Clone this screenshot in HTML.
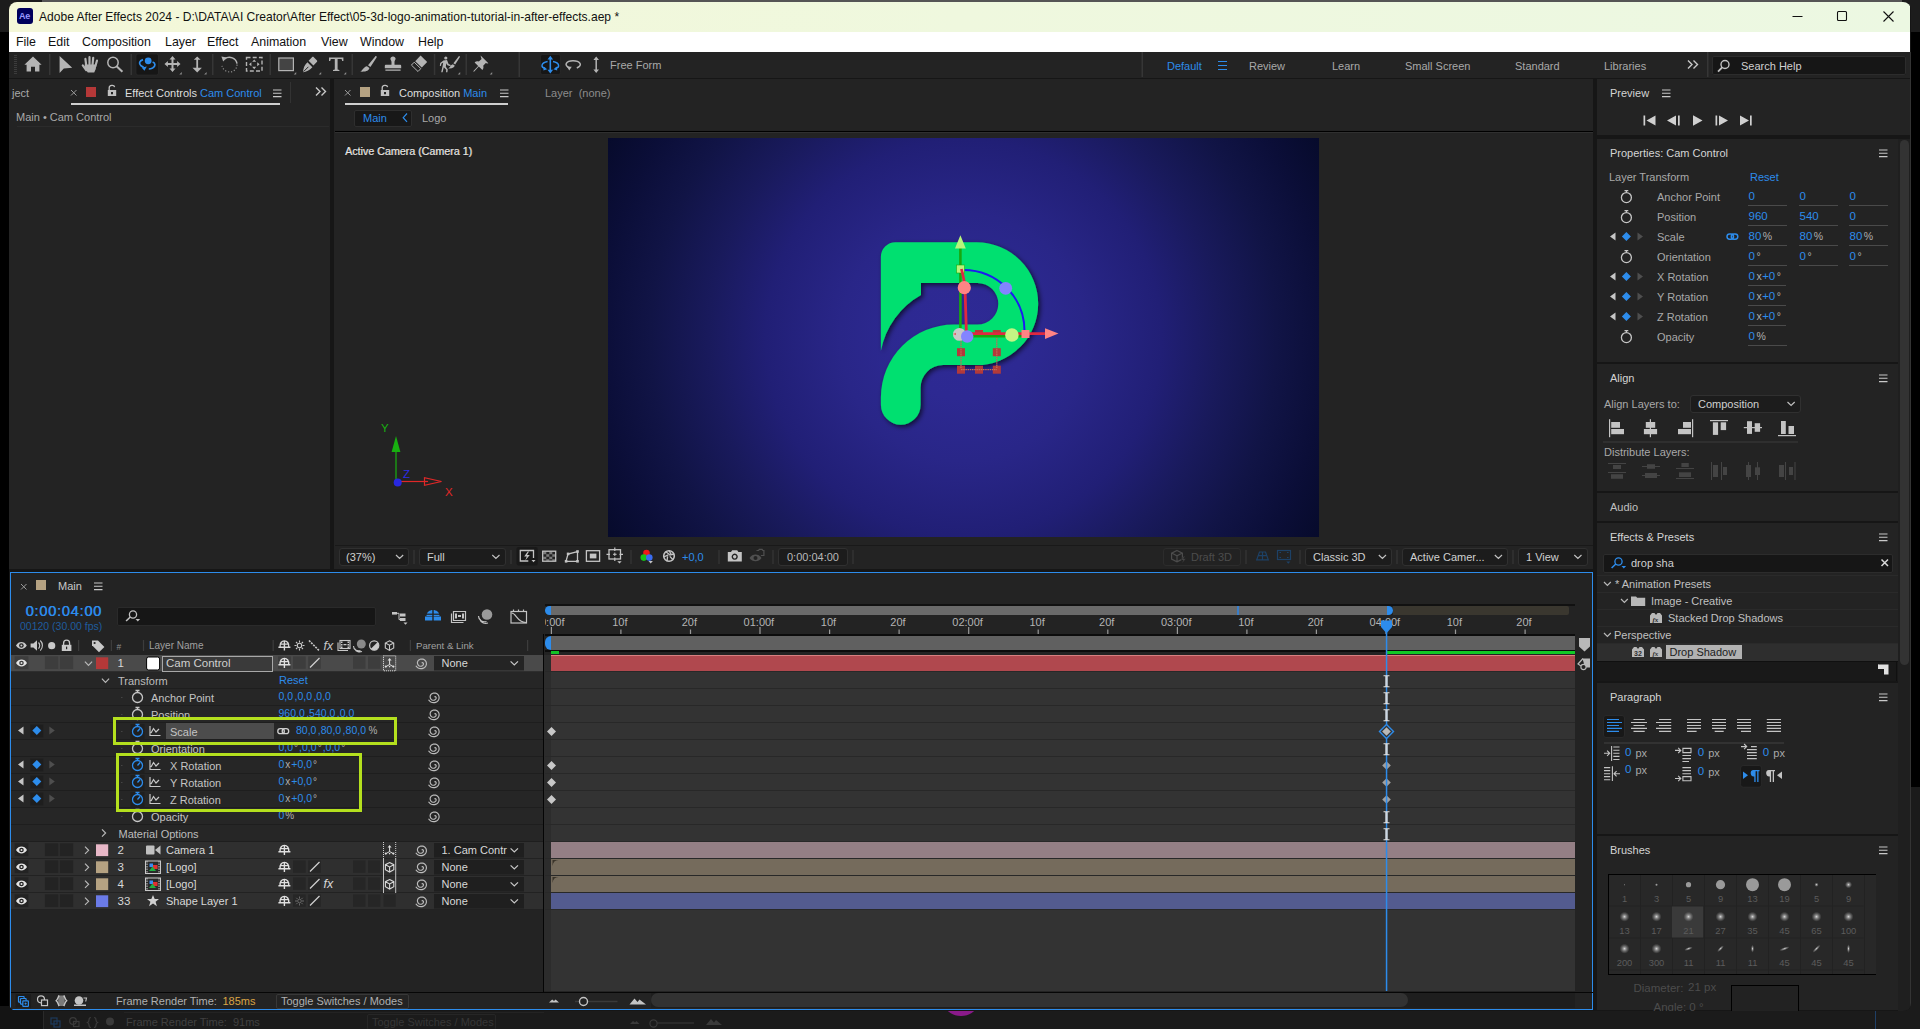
<!DOCTYPE html>
<html><head><meta charset="utf-8"><title>Adobe After Effects 2024</title>
<style>
*{box-sizing:border-box;margin:0;padding:0}
html,body{width:1920px;height:1029px;overflow:hidden;background:#1b1b1b}
body{position:relative;font-family:"Liberation Sans",sans-serif;font-size:11px;color:#a9a9a9;line-height:1}
.a{position:absolute}
.t{position:absolute;white-space:nowrap;line-height:14px;height:14px}
.w{color:#dedede}
.b{color:#2d8ceb}
.g{color:#a9a9a9}
.d{color:#6a6a6a}
#win{position:absolute;left:9px;top:2px;width:1902px;height:1009px;border-radius:8px;overflow:hidden;background:#161616}
/* inside #win coordinates are page coords shifted by (-9,-2): use .pg wrapper */
#pg{position:absolute;left:-9px;top:-2px;width:1920px;height:1029px}
.panel{position:absolute;background:#232323}
svg{position:absolute;overflow:visible}
.sep{position:absolute;width:1px;background:#3a3a3a}
.hl{position:absolute;height:1px;background:#161616}
</style></head><body>
<!-- desktop behind -->
<div class="a" style="left:0;top:0;width:1920px;height:32px;background:#1c1c1c"></div>
<div class="a" style="left:0;top:32px;width:9px;height:974px;background:#000"></div>
<div class="a" style="left:42px;top:0;width:1860px;height:3px;background:#555"></div>
<div class="a" style="left:1910px;top:32px;width:10px;height:755px;background:#000"></div>
<div class="a" style="left:1910px;top:787px;width:10px;height:242px;background:#1b1b1b"></div>
<!-- ghost window below -->
<div class="a" style="left:0;top:1010px;width:1920px;height:19px;background:#1b1b1b"></div>
<div class="a" style="left:0;top:1006px;width:43px;height:23px;background:#141414"></div><div class="a" style="left:43px;top:1010px;width:1px;height:19px;background:#2a2a2a"></div>
<div class="a" style="left:124px;top:1012px;width:420px;height:1px;background:#232323"></div>
<div class="t" style="left:126px;top:1015px;color:#404040">Frame Render Time:&nbsp; 91ms</div>
<div class="a" style="left:367px;top:1014px;width:129px;height:16px;border:1px solid #262626;border-radius:2px"></div>
<div class="t" style="left:372px;top:1015px;color:#363636">Toggle Switches / Modes</div>
<svg style="left:40px;top:1012px" width="700" height="17" viewBox="40 1012 700 17"><g fill="none" stroke="#1d3a5c" stroke-width="1.200"><rect x="51" y="1018" width="6" height="6"/><rect x="54" y="1021" width="6" height="6"/></g><g fill="none" stroke="#3a3a3a" stroke-width="1.200"><circle cx="73" cy="1021" r="3.300"/><rect x="73.500" y="1021.500" width="5.500" height="5"/><path d="M91 1017.500c-2 0-2 1-2 2.500s-.5 2-1.500 2.500c1 .5 1.500 1 1.500 2.500s0 2.500 2 2.500M94 1017.500c2 0 2 1 2 2.500s.5 2 1.500 2.500c-1 .5-1.500 1-1.500 2.500s0 2.500-2 2.500"/><path d="M654 1023h40"/><circle cx="653.500" cy="1023.500" r="3.600" fill="#1b1b1b"/></g><circle cx="110" cy="1021.500" r="4" fill="#3a3a3a"/><path d="M630 1024l3-3 2 1.500 1.500-1.500 3 3zM706 1025l5-6 3 3.500 2-2.500 6 5z" fill="#3a3a3a"/></svg>
<div class="a" style="left:946px;top:996px;width:30px;height:20px;border-radius:50%;background:#8a1a8a"></div>
<div class="a" style="left:1875px;top:1010px;width:1px;height:19px;background:#1f3f66"></div>
<div id="win"><div id="pg">
<!-- title bar -->
<div class="a" style="left:9px;top:2px;width:1901px;height:30px;background:linear-gradient(90deg,#f4f7d8 0%,#eff8de 50%,#ecf8e2 100%)"></div>
<div class="a" style="left:17px;top:8px;width:16px;height:16px;border-radius:3px;background:#00005b"></div>
<div class="t" style="left:19px;top:9px;font-size:9px;font-weight:bold;color:#9999ff;letter-spacing:-0.3px">Ae</div>
<div class="t" style="left:39px;top:10px;font-size:12.050px;color:#111">Adobe After Effects 2024 - D:\DATA\AI Creator\After Effect\05-3d-logo-animation-tutorial-in-after-effects.aep *</div>
<svg style="left:1790px;top:8px" width="110" height="18" viewBox="0 0 110 18"><g stroke="#111" stroke-width="1.1" fill="none"><path d="M2.5 8.5h10"/><rect x="47.5" y="3.5" width="9" height="9" rx="1"/><path d="M93.5 3.5l10 10M103.5 3.5l-10 10"/></g></svg>
<!-- menu bar -->
<div class="a" style="left:9px;top:32px;width:1901px;height:20px;background:#fff"></div>
<div class="t" style="left:16px;top:35px;font-size:12.4px;color:#111">File</div>
<div class="t" style="left:48px;top:35px;font-size:12.4px;color:#111">Edit</div>
<div class="t" style="left:82px;top:35px;font-size:12.4px;color:#111">Composition</div>
<div class="t" style="left:165px;top:35px;font-size:12.4px;color:#111">Layer</div>
<div class="t" style="left:207px;top:35px;font-size:12.4px;color:#111">Effect</div>
<div class="t" style="left:251px;top:35px;font-size:12.4px;color:#111">Animation</div>
<div class="t" style="left:321px;top:35px;font-size:12.4px;color:#111">View</div>
<div class="t" style="left:360px;top:35px;font-size:12.4px;color:#111">Window</div>
<div class="t" style="left:418px;top:35px;font-size:12.4px;color:#111">Help</div>
<!-- toolbar -->
<div class="a" style="left:9px;top:52px;width:1901px;height:26px;background:#232323"></div>
<svg style="left:9px;top:52px" width="1901" height="26" viewBox="9 52 1901 26">
<g fill="#b4b4b4" stroke="none">
<!-- grip -->
<path d="M14 55h3v1h-3zM14 57h3v1h-3zM14 59h3v1h-3zM14 61h3v1h-3zM14 63h3v1h-3zM14 65h3v1h-3zM14 67h3v1h-3zM14 69h3v1h-3zM14 71h3v1h-3zM14 73h3v1h-3z" fill="#3c3c3c"/>
<!-- home -->
<path d="M33 56.6l8.6 8.2h-2.2v6.6h-4.4v-4.6h-4v4.6h-4.4v-6.6h-2.2z"/>
<!-- selection arrow -->
<path d="M59.6 56v17l4.2-4.6 8.4-0.6z"/>
<!-- hand -->
<path d="M84.600 64.500h11.600l-.4 4.500-1.600 3.600h-6.400l-2.600-3.600z"/>
<path d="M86.300 66l-.9-7.200M89.500 65v-7.800M92.500 65l.7-7.200M95.300 66.500l1.700-6M86.200 70l-3.400-4.600" stroke="#b4b4b4" stroke-width="2.200" stroke-linecap="round" fill="none"/>
<!-- zoom -->
<circle cx="113" cy="62.500" r="5.200" fill="none" stroke="#b4b4b4" stroke-width="1.500"/>
<path d="M116.600 66.200l5.800 5.600" stroke="#b4b4b4" stroke-width="2" fill="none"/>
<!-- move -->
<path d="M172.500 56l3 3.400h-2v3.600h3.600v-2l3.400 3-3.400 3v-2h-3.600v3.600h2l-3 3.400-3-3.400h2v-3.600h-3.600v2l-3.400-3 3.400-3v2h3.600v-3.600h-2z"/>
<path d="M181.800 74.500v-2.500l-2.500 2.500zM206.600 74.500v-2.500l-2.500 2.500zM157 74.500v-2.500l-2.500 2.500z" fill="#8a8a8a"/>
<!-- dolly -->
<path d="M197.200 56.500l3.400 3.300h-2.500v8h3.800l-4.700 4.700-4.700-4.700h3.800v-8h-2.500z"/>
<!-- rect -->
<rect x="278.800" y="58" width="14.600" height="12.600" fill="#444" stroke="#b4b4b4" stroke-width="1.200"/>
<path d="M296.200 74.500v-2.500l-2.500 2.500zM321.200 74.500v-2.500l-2.500 2.500zM346.200 74.500v-2.500l-2.500 2.500zM460.200 74.500v-2.500l-2.500 2.500zM492.200 74.500v-2.500l-2.500 2.500z" fill="#8a8a8a"/>
<!-- pen -->
<path d="M303 72.200c.3-3.600 1.400-7.400 4.400-10l5 5c-2.600 3-6.400 4.400-9.400 5zM308.600 60.800l3.400-3.600c.6-.6 1.200-.6 1.800 0l3 3c.6.600.6 1.200 0 1.800l-3.400 3.600z"/>
<path d="M303.600 71.600l4.800-4.800" stroke="#232323" stroke-width="1" fill="none"/>
<!-- T -->
<path d="M329 57.500h14.400v3.600h-1.200l-.6-2h-4v10.400l1.800.4v1.100h-6.400v-1.100l1.800-.4v-10.400h-4l-.6 2h-1.200z"/>
<!-- brush -->
<path d="M376.400 56.200c.4.200.4.800.2 1.200l-6.200 9.600-2.400-1.800 7.200-8.800c.4-.4.800-.4 1.200-.2zM367 66.200l2.400 1.800c-.4 2.400-3 4-9.200 3.600 2.600-1.200 3.200-4.800 6.800-5.400z"/>
<!-- stamp -->
<path d="M393 56.400c1.500 0 2.600 1.100 2.600 2.400 0 1.200-1.100 1.900-1.100 3.200v2.800h5.300c.9 0 1.400.5 1.400 1.400v2h-16.400v-2c0-.9.500-1.400 1.400-1.400h5.300v-2.800c0-1.300-1.100-2-1.100-3.200 0-1.300 1.100-2.400 2.600-2.400zM385.400 69.600h15.200v1.200h-15.200z"/>
<!-- eraser -->
<path d="M420.600 55.600l6.600 6.400-5.400 5.600-6.600-6.400z"/>
<path d="M414.200 62.200l6.600 6.400-2.800 2.900-6.600-6.400z" fill="#232323" stroke="#b4b4b4" stroke-width="1"/>
<!-- roto -->
<circle cx="445.800" cy="58" r="1.600"/>
<path d="M443.400 60.400l3.600-.4 1.600 4 2.200 1-.4 1.200-3-1-1-2-.6 3.600 2 2.600-.4 2.800h-1.400l.2-2.400-2.400-2.600-1.200 5h-1.400l1.600-7.200.4-2.400-1.800 1.200-.4 2.200-1.200-.2.400-2.800z"/>
<path d="M459.600 56.200c.4.200.4.700.2 1l-4.600 7.400-1.800-1.300 5.200-6.900c.3-.4.700-.4 1-.2zM452.800 64.200l1.900 1.400c-.3 1.900-2.300 3.300-6.500 2.900 2-1 2.300-3.800 4.600-4.300z"/>
<!-- pin -->
<path d="M480.600 55.600l7.800 7.600-1.200.4-1.400-.6-2.600 2.800c.6 1.600.2 3-.8 4.200l-3.600-3.600-4.800 5.400-.8-.6 5-5.200-3.600-3.600c1.200-1 2.600-1.400 4.200-.8l2.800-2.600-.6-1.400z"/>
</g>
<!-- separators -->
<g fill="#363636"><rect x="49" y="54" width="1.500" height="21"/><rect x="130.500" y="54" width="1.500" height="21"/><rect x="212" y="54" width="1.500" height="21"/><rect x="269.500" y="54" width="1.500" height="21"/><rect x="351.500" y="54" width="1.500" height="21"/><rect x="433.800" y="54" width="1.500" height="21"/><rect x="465.500" y="54" width="1.500" height="21"/><rect x="518.500" y="52" width="1.500" height="25"/><rect x="1141.500" y="52" width="1.500" height="25"/><rect x="1707" y="52" width="1.500" height="25"/></g>
<!-- orbit selected -->
<rect x="136" y="54" width="22.500" height="21" rx="2" fill="#161616" stroke="#2e2e2e" stroke-width=".6"/>
<circle cx="148.200" cy="60.800" r="3.400" fill="#2d8ceb"/>
<path d="M143 59.600c-3.600 1.200-4.600 4-2 6.200l2.600 1.400M152.600 62c3 1 3.200 4.200 0 6-1.200.6-2.400 1-3.800 1" fill="none" stroke="#2d8ceb" stroke-width="1.700"/>
<path d="M141.600 67.400l5.200-.8-2.400 4.200z" fill="#2d8ceb"/>
<!-- rotate tool -->
<path d="M224.600 58.800c5-3.600 11.600-.6 12.400 4.800" fill="none" stroke="#b4b4b4" stroke-width="1.500"/>
<path d="M237 64.600c.2 5.600-6 9.400-11.400 6.200-2-1.200-3.200-3-3.600-5" fill="none" stroke="#8a8a8a" stroke-width="1.200" stroke-dasharray="1.200 1.800"/>
<path d="M221.400 56.400l5.600 1-3.800 4.200z" fill="#b4b4b4"/>
<!-- pan behind -->
<rect x="246.500" y="57.500" width="15.500" height="13.500" fill="none" stroke="#b4b4b4" stroke-width="1.400" stroke-dasharray="4 2.200"/>
<path d="M254.200 59.400l2 2.400h-4zM254.200 69.200l2-2.400h-4zM249 64.200l2.400-2v4zM259.600 64.200l-2.400-2v4z" fill="#b4b4b4"/>
<!-- axis mode -->
<rect x="540.500" y="54.500" width="20" height="20" rx="2" fill="#161616" stroke="#2e2e2e" stroke-width=".6"/>
<path d="M550.300 58v13.500" stroke="#2d8ceb" stroke-width="1.600" fill="none"/>
<path d="M550.300 55.800l2.800 3.600h-5.600zM550.300 73.400l2.800-3.600h-5.600z" fill="#2d8ceb"/>
<path d="M547.600 61.400c-7 1.400-7 6 -2.400 7M553 61.400c7 1.400 7 6 2.400 7" fill="none" stroke="#2d8ceb" stroke-width="1.500"/>
<path d="M543.600 66.600l3.600 2.600-3.800 1.400zM557 66.600l-3.600 2.600 3.800 1.400z" fill="#2d8ceb"/>
<path d="M569.600 68c-6.400-2.800-3.400-7.200 3.400-7.200 7 0 10.400 4.400 3.800 7.200" fill="none" stroke="#b4b4b4" stroke-width="1.500"/>
<path d="M567 66.400l4.800.4-2.600 3.600z" fill="#b4b4b4"/>
<path d="M596.200 59v11.500" stroke="#b4b4b4" stroke-width="1.500" fill="none"/>
<path d="M596.200 56.600l2.800 3.400h-5.600zM596.200 73l2.800-3.400h-5.600z" fill="#b4b4b4"/>
</svg>
<div class="t" style="left:610px;top:58px">Free Form</div>
<!-- workspace bar -->
<div class="t b" style="left:1167px;top:59px">Default</div>
<svg style="left:1218px;top:61px" width="10" height="9"><path d="M0 .5h9M0 4.500h9M0 8.500h9" stroke="#2d8ceb" stroke-width="1.200"/></svg>
<div class="t" style="left:1249px;top:59px">Review</div>
<div class="t" style="left:1332px;top:59px">Learn</div>
<div class="t" style="left:1405px;top:59px">Small Screen</div>
<div class="t" style="left:1515px;top:59px">Standard</div>
<div class="t" style="left:1604px;top:59px">Libraries</div>
<svg style="left:1687px;top:60px" width="12" height="9"><path d="M1 .5l4 4-4 4M6.500 .5l4 4-4 4" stroke="#c8c8c8" stroke-width="1.400" fill="none"/></svg>
<div class="a" style="left:1712px;top:56px;width:194px;height:19px;background:#161616;border:1px solid #2c2c2c;border-radius:2px"></div>
<svg style="left:1716px;top:58px" width="16" height="16"><circle cx="9" cy="6.500" r="4" fill="none" stroke="#c0c0c0" stroke-width="1.400"/><path d="M6.200 9.400l-4.200 4.200" stroke="#c0c0c0" stroke-width="1.800"/></svg>
<div class="t" style="left:1741px;top:59px;color:#d0d0d0">Search Help</div>
<!-- ===== left panel: effect controls ===== -->
<div class="panel" style="left:9px;top:79px;width:321px;height:490px"></div>
<div class="t" style="left:12px;top:86px">ject</div>
<svg style="left:70px;top:89px" width="8" height="8"><path d="M1 1l5.500 5.500M6.500 1l-5.500 5.500" stroke="#9a9a9a" stroke-width="1"/></svg>
<div class="a" style="left:86px;top:87px;width:10px;height:10px;background:#b53838"></div>
<svg class="lock" style="left:107px;top:84px" width="10" height="13" viewBox="0 0 10 13"><path d="M2.200 6v-2.200c0-3 5-3.400 5.400-.6" fill="none" stroke="#c0c0c0" stroke-width="1.300"/><path d="M.8 6h8.400v6h-8.400z M4 8v2.200h2v-2.200z" fill="#c0c0c0" fill-rule="evenodd"/></svg>
<div class="t w" style="left:125px;top:86px">Effect Controls <span class="b">Cam Control</span></div>
<svg style="left:273px;top:89px" width="9" height="9"><path d="M0 1h8.500M0 4.300h8.500M0 7.600h8.500" stroke="#c8c8c8" stroke-width="1.100"/></svg>
<div class="a" style="left:290px;top:82px;width:1px;height:21px;background:#333"></div>
<svg style="left:315px;top:87px" width="12" height="9"><path d="M1 .5l4 4-4 4M6.500 .5l4 4-4 4" stroke="#c8c8c8" stroke-width="1.400" fill="none"/></svg>
<div class="a" style="left:71px;top:103px;width:209px;height:2px;background:#cfcfcf"></div>
<div class="t" style="left:16px;top:110px">Main &#8226; Cam Control</div>
<div class="a" style="left:17px;top:126px;width:312px;height:1px;background:#2b2b2b"></div>

<!-- ===== composition panel ===== -->
<div class="panel" style="left:334px;top:79px;width:1259px;height:490px"></div>
<svg style="left:344px;top:89px" width="8" height="8"><path d="M1 1l5.500 5.500M6.500 1l-5.500 5.500" stroke="#9a9a9a" stroke-width="1"/></svg>
<div class="a" style="left:360px;top:87px;width:10px;height:10px;background:#b5a282"></div>
<svg style="left:380px;top:84px" width="10" height="13" viewBox="0 0 10 13"><path d="M2.200 6v-2.200c0-3 5-3.400 5.400-.6" fill="none" stroke="#c0c0c0" stroke-width="1.300"/><path d="M.8 6h8.400v6h-8.400z M4 8v2.200h2v-2.200z" fill="#c0c0c0" fill-rule="evenodd"/></svg>
<div class="t w" style="left:399px;top:86px">Composition <span class="b">Main</span></div>
<svg style="left:500px;top:89px" width="9" height="9"><path d="M0 1h8.500M0 4.300h8.500M0 7.600h8.500" stroke="#c8c8c8" stroke-width="1.100"/></svg>
<div class="a" style="left:345px;top:103px;width:163px;height:2px;background:#cfcfcf"></div>
<div class="t" style="left:545px;top:86px;color:#8c8c8c">Layer &nbsp;(none)</div>
<div class="a" style="left:354px;top:110px;width:58px;height:17px;background:#181818;border:1px solid #2e2e2e;border-radius:2px"></div>
<div class="t b" style="left:363px;top:111px">Main</div>
<svg style="left:402px;top:113px" width="6" height="10"><path d="M5 .5l-3.800 4.200 3.800 4.200" stroke="#2d8ceb" stroke-width="1.200" fill="none"/></svg>
<div class="t" style="left:422px;top:111px">Logo</div>
<div class="a" style="left:335px;top:131px;width:1258px;height:1px;background:#000"></div>
<div class="a" style="left:335px;top:132px;width:1258px;height:1px;background:#303030"></div>
<div class="t" style="left:345px;top:144px;font-size:10.700px;color:#e6e6e6;text-shadow:0 0 1px #000,.4px 0 0 #e6e6e6">Active Camera (Camera 1)</div>
<!-- comp image -->
<div class="a" style="left:608px;top:138px;width:711px;height:399px;background:radial-gradient(circle 412px at 50% 50%,#2e2a95 0%,#2d2992 15%,#292688 30%,#211f76 48%,#191a5c 62%,#111446 76%,#0b0e38 88%,#060a2a 100%)"></div>
<svg style="left:608px;top:138px" width="711" height="399" viewBox="608 138 711 399">
<defs><filter id="ds" x="-20%" y="-20%" width="140%" height="140%"><feDropShadow dx="2" dy="2" stdDeviation="2.800" flood-color="#000" flood-opacity=".65"/></filter></defs>
<path filter="url(#ds)" fill="#00e070" d="M895.400 242.200H976.700A61.450 61.450 0 0 1 976.700 365.100H943A22.400 22.400 0 0 0 920.600 387.500V404.800A19.850 19.850 0 0 1 880.900 404.800V397.200A73 73 0 0 1 953.900 324.500H977.500A20.800 20.800 0 0 0 977.500 282.900H921V295A81.500 81.500 0 0 0 880.900 350.700V256.800A14.600 14.600 0 0 1 895.400 242.200Z"/>
<!-- gizmo -->
<g>
<path d="M960.400 331V247" stroke="#18a810" stroke-width="2.600"/>
<path d="M960.400 235.200l5.400 13.300h-10.800z" fill="#b8f57c"/>
<path d="M963.300 269.900A61 61 0 0 1 1024.500 331" fill="none" stroke="#1c1cf0" stroke-width="2"/>
<rect x="956.500" y="265" width="8" height="8" fill="#b8f57c" stroke="#18a810" stroke-width=".6"/>
<path d="M961.400 269c1.600 6 3 12 3.600 19l1.400 45" fill="none" stroke="#e02840" stroke-width="2.800"/>
<g fill="#b23a3a"><rect x="975" y="330" width="8" height="5"/><rect x="992.800" y="330" width="8" height="5"/><rect x="957" y="348.200" width="8" height="8"/><rect x="992.800" y="348.200" width="8" height="8"/><rect x="957" y="365.700" width="8" height="8"/><rect x="975" y="365.700" width="8" height="8"/><rect x="992.800" y="365.700" width="8" height="8"/></g>
<path d="M961 338v30M996.800 338v30M961 369.700h36" stroke="#c46a58" stroke-width="1.200" stroke-dasharray="1.500 .7" fill="none"/>
<circle cx="959.400" cy="334.400" r="6.400" fill="#c8c8c8"/>
<path d="M953 334l3-1.200v2.400z" fill="#e06060"/>
<path d="M970 336h56" stroke="#18a810" stroke-width="3"/>
<path d="M968 333.600h78" stroke="#e02840" stroke-width="2.800"/>
<path d="M1058.500 333.600l-13.500-5.400v10.800z" fill="#ff8484"/>
<rect x="1021.500" y="330" width="8" height="8" fill="#ff8484"/>
<circle cx="964.300" cy="287.700" r="6.600" fill="#ff8484"/>
<circle cx="1005.700" cy="288.300" r="6.400" fill="#8484ff"/>
<circle cx="967.200" cy="336.500" r="6.200" fill="#8484ff"/>
<circle cx="1011.900" cy="335" r="6.800" fill="#c4f584"/>
</g>
</svg>
<!-- axes indicator -->
<svg style="left:375px;top:418px" width="90" height="85" viewBox="375 418 90 85">
<path d="M396 482V448" stroke="#18b010" stroke-width="1.200"/><path d="M396 436l4.400 16h-8.800z" fill="#18b010"/>
<path d="M398 481.500h30" stroke="#e02828" stroke-width="1.200"/><path d="M441.500 481.500l-17-3.800v7.600z" fill="none" stroke="#e02828" stroke-width="1.200"/>
<circle cx="397.700" cy="482.500" r="4" fill="#2828e0"/>
<text x="381" y="432" font-size="11.500" fill="#18b010" font-family="Liberation Sans,sans-serif">Y</text>
<text x="403" y="478" font-size="11.500" fill="#2c2ce8" font-family="Liberation Sans,sans-serif">Z</text>
<text x="445" y="496" font-size="11.500" fill="#e02828" font-family="Liberation Sans,sans-serif">X</text>
</svg>
<!-- comp bottom bar -->
<style>
.dd{position:absolute;top:548px;height:18px;background:#1c1c1c;border:1px solid #303030;border-radius:3px}
.ddt{position:absolute;top:550px;line-height:14px;white-space:nowrap;color:#d0d0d0}
.vs{position:absolute;top:550px;width:2px;height:14px;background:#2e2e2e}
</style>
<div class="a" style="left:335px;top:545px;width:1258px;height:1px;background:#191919"></div>
<div class="dd" style="left:339px;width:70px"></div><div class="ddt" style="left:346px">(37%)</div>
<div class="vs" style="left:413px"></div>
<div class="dd" style="left:419px;width:87px"></div><div class="ddt" style="left:427px">Full</div>
<div class="vs" style="left:510px"></div>
<div class="vs" style="left:630px"></div>
<div class="vs" style="left:718px"></div>
<div class="vs" style="left:772px"></div>
<div class="dd" style="left:778px;width:70px"></div><div class="ddt" style="left:787px;color:#b8b8b8">0:00:04:00</div>
<div class="vs" style="left:852px"></div>
<div class="dd" style="left:1163px;width:78px;border-color:#2c2c2c;background:#222"></div><div class="ddt" style="left:1191px;color:#4c4c4c">Draft 3D</div>
<div class="vs" style="left:1245px"></div>
<div class="vs" style="left:1299px"></div>
<div class="dd" style="left:1305px;width:87px"></div><div class="ddt" style="left:1313px">Classic 3D</div>
<div class="vs" style="left:1396px"></div>
<div class="dd" style="left:1402px;width:106px"></div><div class="ddt" style="left:1410px">Active Camer...</div>
<div class="vs" style="left:1512px"></div>
<div class="dd" style="left:1518px;width:70px"></div><div class="ddt" style="left:1526px">1 View</div>
<svg style="left:334px;top:546px" width="1259" height="22" viewBox="334 546 1259 22">
<g fill="none" stroke="#c0c0c0" stroke-width="1.200">
<path d="M396 555l3.600 3.400 3.600-3.400M492.300 555l3.600 3.400 3.600-3.400M1378.800 555l3.600 3.400 3.600-3.400M1494.800 555l3.600 3.400 3.600-3.400M1574.300 555l3.600 3.400 3.600-3.400"/>
</g>
<rect x="516.500" y="547" width="21.200" height="18.500" rx="2" fill="#191919"/>
<g fill="none" stroke="#c4c4c4" stroke-width="1.300">
<path d="M533.500 558v-7.500h-13.200v10.500h8"/>
<rect x="542.700" y="551.200" width="13" height="10"/>
<path d="M566 561.300l2-7.300 9.500-2.500v9.800z"/>
<rect x="586.400" y="550.700" width="13.200" height="10.600"/>
<rect x="609" y="549.700" width="11.500" height="9.300"/>
</g>
<g fill="#c4c4c4">
<path d="M527.800 551.500l-3.600 5h2.600l-1.600 4 4.600-5.400h-2.800l2-3.600z"/>
<path d="M531.500 560h4l-2 2.200z"/>
<path d="M543.300 551.800h3v2.500h-3zM549.300 551.800h3v2.500h-3zM546.300 554.300h3v2.500h-3zM552.300 554.300h3v2.500h-3zM543.300 556.800h3v2.500h-3zM549.300 556.800h3v2.500h-3zM546.300 559.300h3v1.500h-3zM552.300 559.300h3v1.500h-3z" opacity=".55"/>
<rect x="564.800" y="560" width="2.600" height="2.600"/><rect x="566.800" y="552.600" width="2.600" height="2.600"/><rect x="576.200" y="550.200" width="2.600" height="2.600"/><rect x="576.200" y="560" width="2.600" height="2.600"/>
<rect x="589.800" y="553.600" width="6.600" height="4.800"/>
<path d="M614.800 547.500v3.500M614.800 557.500v3.500M606.500 554.300h3.500M619.500 554.300h3.500" stroke="#c4c4c4" stroke-width="1.200"/>
<path d="M613 554.300h3.600M614.800 552.600v3.400" stroke="#c4c4c4" stroke-width="1"/>
<path d="M617.300 561.200h4.400l-2.200 2.400z"/>
<path d="M648.500 561h4.400l-2.200 2.400z"/>
</g>
<circle cx="646.500" cy="553" r="3.300" fill="#f01818"/><circle cx="643.800" cy="557.600" r="3.300" fill="#18c018"/><circle cx="649.300" cy="557.600" r="3.300" fill="#3a6cf0"/>
<!-- aperture -->
<circle cx="669" cy="556" r="5.300" fill="none" stroke="#c4c4c4" stroke-width="1.600"/>
<path d="M669 550.500l2.500 4.500M674.300 554l-5 1.200M673.300 560l-3.500-3.600M667 561.300l.6-5M663.700 557l4.600-2.200M665.500 551.600l4 3" stroke="#c4c4c4" stroke-width="1.300" fill="none"/>
<!-- camera -->
<path d="M727.800 552h3.200l1.200-1.800h5l1.200 1.800h3.400v9.600h-14z M734.700 553.600a3.100 3.100 0 1 0 .01 0z M734.700 555a1.700 1.700 0 1 1-.01 0z" fill="#c4c4c4" fill-rule="evenodd"/>
<g opacity=".28"><path d="M749.500 558c3-4.600 9-4.600 12 0-3 4.400-9 4.400-12 0z" fill="#c4c4c4"/><circle cx="755.500" cy="558" r="2" fill="#232323"/><path d="M756.500 550.500h2l.8-1.200h2.800l.8 1.200h1v5h-3" fill="none" stroke="#c4c4c4" stroke-width="1.200"/></g>
<!-- draft 3d icon -->
<g fill="none" stroke="#4c4c4c" stroke-width="1.200"><path d="M1177 550.500l5.400 2.600v6l-5.400 2.800-5.400-2.800v-6zM1171.600 553l5.400 2.800 5.400-2.800M1177 556v5.600"/></g>
<path d="M1184 556l-3 4h2.200l-1.200 3.600 3.800-4.800h-2.200l1.400-2.800z" fill="#4c4c4c" stroke="#232323" stroke-width=".5"/>
<g fill="none" stroke="#1d4166" stroke-width="1.200"><path d="M1259.500 552h6l2.800 7.800h-11.600zM1262.500 552v7.800M1257.800 555.600h9.400"/><rect x="1277.500" y="550.500" width="13" height="9"/><path d="M1280 553v-.5h1M1287 552.500h1v.5M1280 557v.5h1M1287 557.500h1v-.5"/></g>
<path d="M1286.300 561.500h4l-2 2.200z" fill="#1d4166"/>
</svg>
<div class="t b" style="left:682px;top:550px">+0,0</div>
<!-- ===== right column ===== -->
<style>.sw{stroke:#c6c6c6;fill:none;stroke-width:1.3}.ul{position:absolute;height:1px;background:#4a4a4a}.menu{position:absolute}</style>
<div class="panel" style="left:1597px;top:79px;width:313px;height:56px"></div>
<div class="panel" style="left:1597px;top:139px;width:313px;height:223px"></div>
<div class="panel" style="left:1597px;top:364px;width:313px;height:127px"></div>
<div class="panel" style="left:1597px;top:493px;width:313px;height:28px"></div>
<div class="panel" style="left:1597px;top:523px;width:313px;height:158px"></div>
<div class="panel" style="left:1597px;top:683px;width:313px;height:151px"></div>
<div class="panel" style="left:1597px;top:836px;width:313px;height:174px"></div>
<div class="a" style="left:1898px;top:139px;width:13px;height:872px;background:#1f1f1f;z-index:3"></div>
<div class="a" style="left:1899.500px;top:140px;width:9px;height:525px;background:#333;border-radius:4.500px;z-index:4"></div>
<div class="a" style="left:1910.300px;top:52px;width:1px;height:960px;background:#343434;z-index:4"></div>
<div class="t w" style="left:1610px;top:86px;color:#d4d4d4">Preview</div>
<svg style="left:1662px;top:89px" width="9" height="9"><path d="M0 1h8.500M0 4.300h8.500M0 7.600h8.500" stroke="#c8c8c8" stroke-width="1.100"/></svg>
<svg style="left:1640px;top:114px" width="116" height="13" viewBox="1640 114 116 13"><g fill="#d0d0d0">
<path d="M1643.500 115.500h1.700v10h-1.700zM1655.500 115.500v10l-9-5z"/>
<path d="M1676 115.500v10l-9-5zM1678 115.500h1.700v10h-1.700z"/>
<path d="M1693 115.300l9.500 5.200-9.500 5.200z"/>
<path d="M1715.500 115.500h1.700v10h-1.700zM1719 115.500l9 5-9 5z"/>
<path d="M1740 115.500l9 5-9 5zM1750 115.500h1.700v10h-1.700z"/>
</g></svg>
<div class="t" style="left:1610px;top:146px;color:#d4d4d4">Properties: Cam Control</div>
<svg style="left:1879px;top:149px" width="9" height="9"><path d="M0 1h8.500M0 4.300h8.500M0 7.600h8.500" stroke="#c8c8c8" stroke-width="1.100"/></svg>
<div class="t" style="left:1609px;top:170px">Layer Transform</div>
<div class="t b" style="left:1750px;top:170px">Reset</div>
<style>.pv{position:absolute;white-space:nowrap;line-height:14px;color:#2d8ceb;font-size:11.500px}.pv i{font-style:normal;color:#b0b0b0;font-size:10.500px;margin-left:1.500px;margin-right:.5px}</style>
<div class="t" style="left:1657px;top:189.6px">Anchor Point</div>
<div class="pv" style="left:1748.5px;top:189.1px">0</div>
<div class="ul" style="left:1748.0px;top:205px;width:39px"></div>
<div class="pv" style="left:1799.5px;top:189.1px">0</div>
<div class="ul" style="left:1799.0px;top:205px;width:39px"></div>
<div class="pv" style="left:1849.5px;top:189.1px">0</div>
<div class="ul" style="left:1849.0px;top:205px;width:39px"></div>
<div class="t" style="left:1657px;top:209.6px">Position</div>
<div class="pv" style="left:1748.5px;top:209.1px">960</div>
<div class="ul" style="left:1748.0px;top:225px;width:39px"></div>
<div class="pv" style="left:1799.5px;top:209.1px">540</div>
<div class="ul" style="left:1799.0px;top:225px;width:39px"></div>
<div class="pv" style="left:1849.5px;top:209.1px">0</div>
<div class="ul" style="left:1849.0px;top:225px;width:39px"></div>
<div class="t" style="left:1657px;top:229.6px">Scale</div>
<div class="pv" style="left:1748.5px;top:229.1px">80<i>%</i></div>
<div class="ul" style="left:1748.0px;top:245px;width:39px"></div>
<div class="pv" style="left:1799.5px;top:229.1px">80<i>%</i></div>
<div class="ul" style="left:1799.0px;top:245px;width:39px"></div>
<div class="pv" style="left:1849.5px;top:229.1px">80<i>%</i></div>
<div class="ul" style="left:1849.0px;top:245px;width:39px"></div>
<div class="t" style="left:1657px;top:249.6px">Orientation</div>
<div class="pv" style="left:1748.5px;top:249.1px">0<i>&deg;</i></div>
<div class="ul" style="left:1748.0px;top:265px;width:39px"></div>
<div class="pv" style="left:1799.5px;top:249.1px">0<i>&deg;</i></div>
<div class="ul" style="left:1799.0px;top:265px;width:39px"></div>
<div class="pv" style="left:1849.5px;top:249.1px">0<i>&deg;</i></div>
<div class="ul" style="left:1849.0px;top:265px;width:39px"></div>
<div class="t" style="left:1657px;top:269.6px">X Rotation</div>
<div class="pv" style="left:1748.5px;top:269.1px">0<i>x</i>+0<i>&deg;</i></div>
<div class="ul" style="left:1748.0px;top:285px;width:38px"></div>
<div class="t" style="left:1657px;top:289.6px">Y Rotation</div>
<div class="pv" style="left:1748.5px;top:289.1px">0<i>x</i>+0<i>&deg;</i></div>
<div class="ul" style="left:1748.0px;top:305px;width:38px"></div>
<div class="t" style="left:1657px;top:309.6px">Z Rotation</div>
<div class="pv" style="left:1748.5px;top:309.1px">0<i>x</i>+0<i>&deg;</i></div>
<div class="ul" style="left:1748.0px;top:325px;width:38px"></div>
<div class="t" style="left:1657px;top:329.6px">Opacity</div>
<div class="pv" style="left:1748.5px;top:329.1px">0<i>%</i></div>
<div class="ul" style="left:1748.0px;top:345px;width:39px"></div>
<svg style="left:1597px;top:139px" width="300" height="223" viewBox="1597 139 300 223"><circle cx="1626.400" cy="197.6" r="5" class="sw"/><path d="M1624.500 190.6h3.800M1626.400 190.6v2" class="sw"/><circle cx="1626.400" cy="217.6" r="5" class="sw"/><path d="M1624.500 210.6h3.800M1626.400 210.6v2" class="sw"/><path d="M1610 236.6l5.500-4v8z" fill="#c6c6c6"/><path d="M1626.400 232.1l4.500 4.500-4.500 4.500-4.500-4.500z" fill="#2d8ceb"/><path d="M1643 236.6l-5.500-4v8z" fill="#4e4e4e"/><circle cx="1626.400" cy="257.6" r="5" class="sw"/><path d="M1624.500 250.6h3.800M1626.400 250.6v2" class="sw"/><path d="M1610 276.6l5.500-4v8z" fill="#c6c6c6"/><path d="M1626.400 272.1l4.500 4.500-4.500 4.500-4.500-4.500z" fill="#2d8ceb"/><path d="M1643 276.6l-5.500-4v8z" fill="#4e4e4e"/><path d="M1610 296.6l5.500-4v8z" fill="#c6c6c6"/><path d="M1626.400 292.1l4.500 4.500-4.500 4.500-4.500-4.500z" fill="#2d8ceb"/><path d="M1643 296.6l-5.500-4v8z" fill="#4e4e4e"/><path d="M1610 316.6l5.500-4v8z" fill="#c6c6c6"/><path d="M1626.400 312.1l4.500 4.500-4.500 4.500-4.500-4.500z" fill="#2d8ceb"/><path d="M1643 316.6l-5.500-4v8z" fill="#4e4e4e"/><circle cx="1626.400" cy="337.6" r="5" class="sw"/><path d="M1624.500 330.6h3.800M1626.400 330.6v2" class="sw"/><g fill="none" stroke="#2d8ceb" stroke-width="1.500"><rect x="1727" y="234" width="6.500" height="5.200" rx="2.600"/><rect x="1731.300" y="234" width="6.500" height="5.200" rx="2.600"/></g></svg>
<div class="t" style="left:1610px;top:371px;color:#d4d4d4">Align</div>
<svg style="left:1879px;top:374px" width="9" height="9"><path d="M0 1h8.500M0 4.300h8.500M0 7.600h8.500" stroke="#c8c8c8" stroke-width="1.100"/></svg>
<div class="t" style="left:1604px;top:397px">Align Layers to:</div>
<div class="a" style="left:1690px;top:395px;width:111px;height:18px;background:#1c1c1c;border:1px solid #303030;border-radius:3px"></div>
<div class="t" style="left:1698px;top:397px;color:#d0d0d0">Composition</div>
<div class="a" style="left:1603px;top:441px;width:195px;height:2px;background:#2f2f2f"></div>
<div class="t" style="left:1604px;top:445px">Distribute Layers:</div>
<svg style="left:1597px;top:390px" width="300" height="100" viewBox="1597 390 300 100">
<path d="M1787.500 402l3.600 3.400 3.600-3.400" fill="none" stroke="#c0c0c0" stroke-width="1.200"/>
<g fill="#c4c4c4">
<rect x="1609" y="419.200" width="1.200" height="18"/><rect x="1611.200" y="422" width="8.800" height="5.800"/><rect x="1611.200" y="429" width="12.800" height="5.200"/>
<rect x="1649.800" y="419.200" width="1.200" height="18"/><rect x="1645.800" y="422" width="9.400" height="5.800"/><rect x="1643.900" y="429" width="13.200" height="5.200"/>
<rect x="1692" y="419.200" width="1.200" height="18"/><rect x="1683" y="422" width="8" height="5.800"/><rect x="1678" y="429" width="13" height="5.200"/>
<rect x="1710" y="420" width="18" height="1.200"/><rect x="1712.900" y="422.300" width="5.200" height="12.600"/><rect x="1720.700" y="422.300" width="5.400" height="7.800"/>
<rect x="1743.800" y="427" width="18.200" height="1.200"/><rect x="1747" y="421.200" width="5" height="12.700"/><rect x="1754.700" y="423.200" width="5.400" height="8.600"/>
<rect x="1778" y="435" width="18" height="1.200"/><rect x="1781" y="421" width="4.800" height="13"/><rect x="1788.500" y="426" width="5.500" height="8"/>
</g>
<g fill="#444">
<rect x="1608" y="463" width="18" height="1"/><rect x="1608" y="472" width="18" height="1"/><rect x="1613" y="465" width="8" height="4"/><rect x="1611" y="474.200" width="12" height="4.600"/>
<rect x="1642" y="466" width="18" height="1"/><rect x="1642" y="475" width="18" height="1"/><rect x="1647" y="464.200" width="8" height="4.600"/><rect x="1645" y="473" width="12" height="5"/>
<rect x="1676" y="468" width="18" height="1"/><rect x="1676" y="478" width="18" height="1"/><rect x="1681.400" y="463" width="7.400" height="4"/><rect x="1679" y="472.300" width="12" height="4.700"/>
<rect x="1711" y="462" width="1" height="18"/><rect x="1721" y="462" width="1" height="18"/><rect x="1713" y="465" width="5" height="12"/><rect x="1723" y="467" width="4" height="8"/>
<rect x="1748" y="462" width="1" height="18"/><rect x="1757" y="462" width="1" height="18"/><rect x="1746" y="465" width="5" height="12"/><rect x="1755" y="467.300" width="5" height="7.700"/>
<rect x="1785" y="462" width="1" height="18"/><rect x="1794.500" y="462" width="1" height="18"/><rect x="1779" y="465" width="5" height="12"/><rect x="1789" y="467" width="4" height="8"/>
</g></svg>
<div class="t" style="left:1610px;top:500px;color:#c0c0c0">Audio</div>
<div class="t" style="left:1610px;top:530px;color:#d4d4d4">Effects &amp; Presets</div>
<svg style="left:1879px;top:533px" width="9" height="9"><path d="M0 1h8.500M0 4.300h8.500M0 7.600h8.500" stroke="#c8c8c8" stroke-width="1.100"/></svg>
<div class="a" style="left:1602.500px;top:554px;width:290px;height:18.500px;background:#161616;border:1px solid #2c2c2c;border-radius:2px"></div>
<div class="t" style="left:1631px;top:556px;color:#d0d0d0">drop sha</div>
<div class="a" style="left:1597px;top:644px;width:301px;height:17px;background:#2e2e2e"></div>
<div class="a" style="left:1597px;top:575px;width:301px;height:1px;background:#2a2a2a"></div>
<div class="a" style="left:1597px;top:592px;width:301px;height:1px;background:#2a2a2a"></div>
<div class="a" style="left:1597px;top:609px;width:301px;height:1px;background:#2a2a2a"></div>
<div class="a" style="left:1597px;top:626px;width:301px;height:1px;background:#2a2a2a"></div>
<div class="a" style="left:1597px;top:643px;width:301px;height:1px;background:#2a2a2a"></div>
<div class="a" style="left:1597px;top:661px;width:301px;height:20px;background:#191919"></div>
<div class="a" style="left:1597px;top:661px;width:301px;height:1px;background:#101010"></div>
<div class="a" style="left:1896px;top:661px;width:1px;height:20px;background:#101010"></div>
<div class="t" style="left:1615px;top:577px;color:#c0c0c0">* Animation Presets</div>
<div class="t" style="left:1651px;top:594px;color:#c0c0c0">Image - Creative</div>
<div class="t" style="left:1668px;top:611px;color:#c0c0c0">Stacked Drop Shadows</div>
<div class="t" style="left:1614px;top:628px;color:#c0c0c0">Perspective</div>
<div class="a" style="left:1666px;top:645px;width:76px;height:14px;background:#b2b2b2"></div>
<div class="t" style="left:1669.500px;top:645px;color:#1c1c1c">Drop Shadow</div>
<svg style="left:1597px;top:550px" width="300" height="132" viewBox="1597 550 300 132">
<circle cx="1618.500" cy="561.500" r="3.600" fill="none" stroke="#2d8ceb" stroke-width="1.300"/><path d="M1615.800 564l-4.200 4" stroke="#2d8ceb" stroke-width="1.600"/><path d="M1621.500 566h4.600l-2.300 2.600z" fill="#2d8ceb"/>
<path d="M1881.500 559.500l6.500 6.500M1888 559.500l-6.500 6.500" stroke="#d8d8d8" stroke-width="1.500"/>
<g fill="none" stroke="#b8b8b8" stroke-width="1.200"><path d="M1604 582l3.400 3.400 3.400-3.400M1621 599l3.400 3.400 3.400-3.400M1604 633l3.400 3.400 3.400-3.400"/></g>
<path d="M1631 596.500h5l1.200 1.300h8v8.200h-14.200z" fill="#b8b8b8"/>
<g fill="#b8b8b8"><path d="M1650 615.500l2-2.500h2.500l1 1.500h1l1-1.500h2.500l2 2.500v7.500h-12z"/><path d="M1632 649.500l2-2.500h2.500l1 1.500h1l1-1.500h2.500l2 2.500v7.500h-12z"/><path d="M1650 649.500l2-2.500h2.500l1 1.500h1l1-1.500h2.500l2 2.500v7.500h-12z"/></g>
<text x="1652.500" y="622" font-size="7" font-style="italic" font-weight="bold" fill="#232323" font-family="Liberation Serif,serif">fx</text>
<text x="1634" y="656.300" font-size="7" font-weight="bold" fill="#2e2e2e" font-family="Liberation Sans,sans-serif" textLength="8">32</text>
<text x="1652.500" y="656" font-size="7" font-style="italic" font-weight="bold" fill="#2e2e2e" font-family="Liberation Serif,serif">fx</text>
<path d="M1878.500 664.500h10v10h-4.500v-5.500h-5.500z" fill="#e0e0e0"/><path d="M1878.500 664.500v4.500" stroke="#e0e0e0"/>
</svg>
<!-- Paragraph -->
<div class="t" style="left:1610px;top:690px;color:#d4d4d4">Paragraph</div>
<svg style="left:1879px;top:693px" width="9" height="9"><path d="M0 1h8.500M0 4.300h8.500M0 7.600h8.500" stroke="#c8c8c8" stroke-width="1.100"/></svg>
<div class="a" style="left:1604px;top:742px;width:180px;height:2px;background:#323232"></div>
<svg style="left:1597px;top:710px" width="300" height="85" viewBox="1597 710 300 85"><rect x="1603.500" y="715.500" width="21" height="22" rx="2.500" fill="#181818" stroke="#2c2c2c" stroke-width=".8"/><path d="M1607 719.5H1619M1607 722.5H1622M1607 725.5H1619M1607 728.4H1622M1607 731.4H1619" stroke="#2d8ceb" stroke-width="1.200" fill="none"/><path d="M1633.5 719.5H1644.7M1631 722.5H1647M1633.5 725.5H1644.7M1631 728.4H1647M1633.5 731.4H1644.7" stroke="#c4c4c4" stroke-width="1.200" fill="none"/><path d="M1659 719.5H1671.2M1656 722.5H1671.2M1659 725.5H1671.2M1656 728.4H1671.2M1659 731.4H1671.2" stroke="#c4c4c4" stroke-width="1.200" fill="none"/><path d="M1687 719.5H1701M1687 722.5H1701M1687 725.5H1701M1687 728.4H1701M1687 731.4H1696.6" stroke="#c4c4c4" stroke-width="1.200" fill="none"/><path d="M1712 719.5H1726M1712 722.5H1726M1712 725.5H1726M1712 728.4H1726M1714.7 731.4H1723.7" stroke="#c4c4c4" stroke-width="1.200" fill="none"/><path d="M1737 719.5H1751M1737 722.5H1751M1737 725.5H1751M1737 728.4H1751M1741 731.4H1751" stroke="#c4c4c4" stroke-width="1.200" fill="none"/><path d="M1766.8 719.5H1781M1766.8 722.5H1781M1766.8 725.5H1781M1766.8 728.4H1781M1766.8 731.4H1781" stroke="#c4c4c4" stroke-width="1.200" fill="none"/><path d="M1604 753.3H1609.7M1607.1000000000001 750.6999999999999L1609.7 753.3L1607.1000000000001 755.9M1611.600 746V761M1613.300 747H1619.500M1613.300 750.2H1619.500M1613.300 753.3H1619.500M1613.300 756.4H1619.500M1613.300 759.5H1619.500M1675 750.4H1680.8M1678.2 747.8L1680.8 750.4L1678.2 753.0M1682.900 748.400H1691V752.600H1682.900ZM1682.400 755.5H1691M1682.400 758.6H1691M1682.400 761.5H1689M1741 746.6H1746.7M1744.1000000000001 744.0L1746.7 746.6L1744.1000000000001 749.2M1751 746.600H1756.800M1747 749.6H1756.800M1747 752.6H1756.800M1747 755.5H1756.800M1747 758.6H1756.800M1604 767.6H1610.200M1604 770.6H1610.200M1604 773.7H1610.200M1604 776.6H1610.200M1604 779.7H1610.200M1612.400 766.200V781M1620 773.7H1614M1616.6 771.1L1614 773.7L1616.6 776.3000000000001M1682.400 767.6H1691M1682.400 770.6H1691M1682.400 773.7H1691M1682.900 776.600H1691V780.700H1682.900ZM1675 778.5H1680.8M1678.2 775.9L1680.8 778.5L1678.2 781.1" stroke="#c4c4c4" stroke-width="1.100" fill="none"/><rect x="1740.600" y="765.500" width="21" height="21.700" rx="2.500" fill="#181818" stroke="#2c2c2c" stroke-width=".8"/><path d="M1743 771.500l5 3.800-5 3.800z" fill="#2d8ceb"/><path d="M1753.500 770h6v1.200h-1v10.800h-1.300v-10.800h-1.600v10.800h-1.300v-5.600a3.200 3.200 0 0 1 -.8-6.400z" fill="#2d8ceb"/><path d="M1769 770h6v1.200h-1v10.800h-1.300v-10.800h-1.600v10.800h-1.300v-5.600a3.200 3.200 0 0 1 -.8-6.400z" fill="#c4c4c4"/><path d="M1782 771.500l-5 3.800 5 3.800z" fill="#c4c4c4"/></svg>
<style>.pz{position:absolute;white-space:nowrap;line-height:14px;color:#2d8ceb;font-size:11.500px}.px{position:absolute;white-space:nowrap;line-height:14px;color:#a9a9a9;font-size:11px}</style>
<div class="pz" style="left:1625px;top:745px">0</div><div class="px" style="left:1635.5px;top:746px">px</div>
<div class="pz" style="left:1697.7px;top:745px">0</div><div class="px" style="left:1708.2px;top:746px">px</div>
<div class="pz" style="left:1762.8px;top:745px">0</div><div class="px" style="left:1773.3px;top:746px">px</div>
<div class="pz" style="left:1625px;top:762px">0</div><div class="px" style="left:1635.5px;top:763px">px</div>
<div class="pz" style="left:1697.7px;top:764px">0</div><div class="px" style="left:1708.2px;top:765px">px</div>
<!-- Brushes -->
<div class="t" style="left:1610px;top:843px;color:#d4d4d4">Brushes</div>
<svg style="left:1879px;top:846px" width="9" height="9"><path d="M0 1h8.500M0 4.300h8.500M0 7.600h8.500" stroke="#c8c8c8" stroke-width="1.100"/></svg>
<div class="a" style="left:1608px;top:874px;width:267.500px;height:100.500px;background:#282828;border:1px solid #000;border-right:none;overflow:hidden"></div>
<svg style="left:1597px;top:870px" width="300" height="106" viewBox="1597 870 300 106"><rect x="1640.0" y="875" width="1" height="99" fill="#222"/><rect x="1672.0" y="875" width="1" height="99" fill="#222"/><rect x="1704.0" y="875" width="1" height="99" fill="#222"/><rect x="1736.0" y="875" width="1" height="99" fill="#222"/><rect x="1768.0" y="875" width="1" height="99" fill="#222"/><rect x="1800.0" y="875" width="1" height="99" fill="#222"/><rect x="1832.0" y="875" width="1" height="99" fill="#222"/><rect x="1864.0" y="875" width="1" height="99" fill="#222"/><rect x="1609" y="905.5" width="254.500" height="1" fill="#222"/><rect x="1609" y="937.5" width="254.500" height="1" fill="#222"/><rect x="1609" y="969.5" width="254.500" height="1" fill="#222"/><rect x="1672" y="906.500" width="31" height="31" fill="#3a3a3a"/><defs><radialGradient id="sb"><stop offset="0" stop-color="#dcdcdc"/><stop offset=".3" stop-color="#b0b0b0" stop-opacity=".75"/><stop offset="1" stop-color="#888" stop-opacity="0"/></radialGradient></defs><circle cx="1624.5" cy="884.7" r="0.5" fill="#9a9a9a"/><text x="1624.5" y="902.0" text-anchor="middle" font-size="9.400" fill="#5c5c5c" font-family="Liberation Sans,sans-serif">1</text><circle cx="1656.5" cy="884.7" r="1" fill="#9a9a9a"/><text x="1656.5" y="902.0" text-anchor="middle" font-size="9.400" fill="#5c5c5c" font-family="Liberation Sans,sans-serif">3</text><circle cx="1688.5" cy="884.7" r="2.6" fill="#9a9a9a"/><text x="1688.5" y="902.0" text-anchor="middle" font-size="9.400" fill="#5c5c5c" font-family="Liberation Sans,sans-serif">5</text><circle cx="1720.5" cy="884.7" r="4.6" fill="#9a9a9a"/><text x="1720.5" y="902.0" text-anchor="middle" font-size="9.400" fill="#5c5c5c" font-family="Liberation Sans,sans-serif">9</text><circle cx="1752.5" cy="884.7" r="6.5" fill="#9a9a9a"/><text x="1752.5" y="902.0" text-anchor="middle" font-size="9.400" fill="#5c5c5c" font-family="Liberation Sans,sans-serif">13</text><circle cx="1784.5" cy="884.7" r="6.5" fill="#9a9a9a"/><text x="1784.5" y="902.0" text-anchor="middle" font-size="9.400" fill="#5c5c5c" font-family="Liberation Sans,sans-serif">19</text><circle cx="1816.5" cy="884.7" r="2.2" fill="url(#sb)"/><text x="1816.5" y="902.0" text-anchor="middle" font-size="9.400" fill="#5c5c5c" font-family="Liberation Sans,sans-serif">5</text><circle cx="1848.5" cy="884.7" r="3.6" fill="url(#sb)"/><text x="1848.5" y="902.0" text-anchor="middle" font-size="9.400" fill="#5c5c5c" font-family="Liberation Sans,sans-serif">9</text><circle cx="1624.5" cy="916.7" r="5" fill="url(#sb)"/><text x="1624.5" y="934.0" text-anchor="middle" font-size="9.400" fill="#5c5c5c" font-family="Liberation Sans,sans-serif">13</text><circle cx="1656.5" cy="916.7" r="5" fill="url(#sb)"/><text x="1656.5" y="934.0" text-anchor="middle" font-size="9.400" fill="#5c5c5c" font-family="Liberation Sans,sans-serif">17</text><circle cx="1688.5" cy="916.7" r="5" fill="url(#sb)"/><text x="1688.5" y="934.0" text-anchor="middle" font-size="9.400" fill="#5c5c5c" font-family="Liberation Sans,sans-serif">21</text><circle cx="1720.5" cy="916.7" r="5" fill="url(#sb)"/><text x="1720.5" y="934.0" text-anchor="middle" font-size="9.400" fill="#5c5c5c" font-family="Liberation Sans,sans-serif">27</text><circle cx="1752.5" cy="916.7" r="5" fill="url(#sb)"/><text x="1752.5" y="934.0" text-anchor="middle" font-size="9.400" fill="#5c5c5c" font-family="Liberation Sans,sans-serif">35</text><circle cx="1784.5" cy="916.7" r="5" fill="url(#sb)"/><text x="1784.5" y="934.0" text-anchor="middle" font-size="9.400" fill="#5c5c5c" font-family="Liberation Sans,sans-serif">45</text><circle cx="1816.5" cy="916.7" r="5" fill="url(#sb)"/><text x="1816.5" y="934.0" text-anchor="middle" font-size="9.400" fill="#5c5c5c" font-family="Liberation Sans,sans-serif">65</text><circle cx="1848.5" cy="916.7" r="5" fill="url(#sb)"/><text x="1848.5" y="934.0" text-anchor="middle" font-size="9.400" fill="#5c5c5c" font-family="Liberation Sans,sans-serif">100</text><circle cx="1624.5" cy="948.7" r="5" fill="url(#sb)"/><text x="1624.5" y="966.0" text-anchor="middle" font-size="9.400" fill="#5c5c5c" font-family="Liberation Sans,sans-serif">200</text><circle cx="1656.5" cy="948.7" r="5" fill="url(#sb)"/><text x="1656.5" y="966.0" text-anchor="middle" font-size="9.400" fill="#5c5c5c" font-family="Liberation Sans,sans-serif">300</text><ellipse cx="1688.5" cy="948.7" rx="4.5" ry="1.600" fill="url(#sb)" transform="rotate(-20 1688.5 948.7)"/><text x="1688.5" y="966.0" text-anchor="middle" font-size="9.400" fill="#5c5c5c" font-family="Liberation Sans,sans-serif">11</text><ellipse cx="1720.5" cy="948.7" rx="4.5" ry="1.600" fill="url(#sb)" transform="rotate(-45 1720.5 948.7)"/><text x="1720.5" y="966.0" text-anchor="middle" font-size="9.400" fill="#5c5c5c" font-family="Liberation Sans,sans-serif">11</text><ellipse cx="1752.5" cy="948.7" rx="4" ry="1.600" fill="url(#sb)" transform="rotate(-90 1752.5 948.7)"/><text x="1752.5" y="966.0" text-anchor="middle" font-size="9.400" fill="#5c5c5c" font-family="Liberation Sans,sans-serif">11</text><ellipse cx="1784.5" cy="948.7" rx="5.5" ry="1.600" fill="url(#sb)" transform="rotate(-20 1784.5 948.7)"/><text x="1784.5" y="966.0" text-anchor="middle" font-size="9.400" fill="#5c5c5c" font-family="Liberation Sans,sans-serif">45</text><ellipse cx="1816.5" cy="948.7" rx="5.5" ry="1.600" fill="url(#sb)" transform="rotate(-45 1816.5 948.7)"/><text x="1816.5" y="966.0" text-anchor="middle" font-size="9.400" fill="#5c5c5c" font-family="Liberation Sans,sans-serif">45</text><ellipse cx="1848.5" cy="948.7" rx="4.5" ry="1.600" fill="url(#sb)" transform="rotate(-90 1848.5 948.7)"/><text x="1848.5" y="966.0" text-anchor="middle" font-size="9.400" fill="#5c5c5c" font-family="Liberation Sans,sans-serif">45</text></svg>
<div class="t" style="left:1633.500px;top:981px;color:#4c4c4c;font-size:11.500px">Diameter:</div>
<div class="t" style="left:1688px;top:980px;color:#4c4c4c;font-size:11.500px">21 px</div>
<div class="t" style="left:1653.500px;top:1000px;color:#4c4c4c;font-size:11.500px">Angle: 0 &deg;</div>
<div class="a" style="left:1731px;top:985px;width:67.500px;height:30px;border:1px solid #000;background:#222"></div>
<!-- ===== timeline ===== -->
<div class="a" style="left:10px;top:572px;width:1583px;height:438px;background:#232323;border:1.200px solid #2d8ceb"></div>
<svg style="left:20px;top:583px" width="8" height="8"><path d="M1 1l5.500 5.500M6.500 1l-5.500 5.500" stroke="#9a9a9a" stroke-width="1"/></svg>
<div class="a" style="left:36px;top:580px;width:10px;height:10px;background:#b5a282"></div>
<div class="t" style="left:58px;top:579px;color:#c8c8c8">Main</div>
<svg style="left:94px;top:582px" width="9" height="9"><path d="M0 1h8.500M0 4.300h8.500M0 7.600h8.500" stroke="#c8c8c8" stroke-width="1.100"/></svg>
<div class="t" style="left:25.500px;top:602px;height:18px;line-height:18px;font-size:14.600px;color:#2d8ceb;text-shadow:.4px 0 0 #2d8ceb;letter-spacing:.75px">0:00:04:00</div>
<div class="t" style="left:20px;top:619px;font-size:10.500px;color:#1f5c9e">00120 (30.00 fps)</div>
<div class="a" style="left:116.500px;top:607px;width:259px;height:19px;background:#161616;border:1px solid #2a2a2a;border-radius:2px"></div>
<svg style="left:10px;top:600px" width="540" height="56" viewBox="10 600 540 56"><circle cx="133" cy="614.500" r="3.600" fill="none" stroke="#c0c0c0" stroke-width="1.300"/><path d="M130.300 617l-4.200 4" stroke="#c0c0c0" stroke-width="1.600"/><path d="M135.500 619h4.600l-2.300 2.600z" fill="#c0c0c0"/><g fill="#c4c4c4"><rect x="392" y="612" width="5" height="2.600"/><rect x="400" y="613.500" width="5.500" height="3"/><rect x="400" y="618" width="5.500" height="3"/><path d="M397 613.300h2v6.300h1.500" fill="none" stroke="#c4c4c4" stroke-width="1"/><path d="M403.500 622.500h4l-2 2.200z"/></g><g fill="#2d8ceb"><path d="M425 620.500h16v-4h-16zM426.500 616c0-8 13-8 13 0z"/><rect x="432.300" y="609.500" width="1.400" height="12" fill="#232323"/><rect x="426" y="613.600" width="14" height="1.200" fill="#232323"/></g><g fill="none" stroke="#c4c4c4" stroke-width="1.200"><path d="M453.500 611.500h12v9h-12zM451.500 613.500v9h12"/></g><path d="M455 613.500h2v5h-2zM462 613.500h2v5h-2zM458 615h3v2h-3z" fill="#c4c4c4"/><circle cx="487" cy="614.500" r="5.300" fill="#9a9a9a"/><path d="M478.500 616c0 4 4 6.500 8 5.500M480 619.500c1 3.500 5 4.500 8 3.500" fill="none" stroke="#c4c4c4" stroke-width="1.200"/><g fill="none" stroke="#c4c4c4" stroke-width="1.200"><rect x="511" y="611.500" width="15.500" height="11.500"/><path d="M513.500 609.500v2M518.500 609.500v2M523.500 609.500v2M511.500 613c5 0 5 9 14.500 9.500"/></g><g fill="#c8c8c8"><path d="M16 645.500c2.600-4.600 8.200-4.600 10.800 0-2.600 4.600-8.200 4.600-10.800 0z"/></g><circle cx="21.400" cy="645.500" r="2.300" fill="#232323"/><circle cx="21.400" cy="645.500" r="1" fill="#c8c8c8"/><path d="M30.600 643.500h2.800l3.600-3.300v10.600l-3.600-3.300h-2.800z" fill="#c8c8c8"/><path d="M38.500 642.500c1.600 1.600 1.600 4.600 0 6.200M40.300 640.500c2.800 2.800 2.800 7.400 0 10.200" fill="none" stroke="#c8c8c8" stroke-width="1.100"/><circle cx="51.700" cy="645.700" r="3.600" fill="#c8c8c8"/><path d="M63.600 645v-1.800c0-4 6-4 6 0v1.800" fill="none" stroke="#c8c8c8" stroke-width="1.300"/><rect x="61.800" y="644.800" width="9.600" height="6.200" fill="#c8c8c8"/><rect x="66" y="646.600" width="1.200" height="2.600" fill="#232323"/><path d="M92 640.500h6l6.400 6.400-5.400 5.400-7-7z" fill="#c8c8c8"/><circle cx="94.600" cy="643" r="1.100" fill="#232323"/><rect x="78" y="640" width="1.200" height="11" fill="#3c3c3c"/><rect x="110.8" y="640" width="1.200" height="11" fill="#3c3c3c"/><rect x="142.9" y="640" width="1.200" height="11" fill="#3c3c3c"/><rect x="272.6" y="640" width="1.200" height="11" fill="#3c3c3c"/><rect x="409.8" y="640" width="1.200" height="11" fill="#3c3c3c"/><rect x="527" y="640" width="1.200" height="11" fill="#3c3c3c"/><g fill="none" stroke="#d8d8d8" stroke-width="1.400"><path d="M278.4 647.3h12M280.09999999999997 647.3c-1.200-8.600 9.800-8.600 8.600 0M280.4 644.1h8M284.4 641v9.500"/></g><circle cx="299.500" cy="645.500" r="2.200" fill="none" stroke="#c8c8c8" stroke-width="1.100"/><path d="M299.500 640.500v2M299.500 648.500v2M294.500 645.500h2M302.500 645.500h2M296 642l1.400 1.400M301.600 647.600l1.400 1.400M303 642l-1.400 1.400M296 649l1.400-1.400" stroke="#c8c8c8" stroke-width="1.100"/><path d="M309 640.500l10 10" stroke="#c8c8c8" stroke-width="1.600" stroke-dasharray="2 1"/><text x="323.500" y="649.500" font-size="12.500" font-style="italic" fill="#c8c8c8" font-family="Liberation Sans,sans-serif">fx</text><g fill="none" stroke="#c8c8c8" stroke-width="1.100"><rect x="340" y="640.500" width="10" height="8"/><path d="M338 642.500v8h10"/></g><path d="M341 641.500h1.500v1.500h-1.500zM341 644h1.500v1.500h-1.500zM341 646.500h1.500v1.500h-1.500zM347.500 641.500h1.500v1.500h-1.500zM347.500 644h1.500v1.500h-1.500zM347.500 646.500h1.500v1.500h-1.500zM343.500 644h3v1.200h-3z" fill="#c8c8c8"/><circle cx="361.300" cy="644" r="4.500" fill="#8a8a8a"/><path d="M353.500 646c0 3.500 3.500 5.500 7 4.600M355 649c1 3 4.500 3.500 7 2.600" fill="none" stroke="#c8c8c8" stroke-width="1.100"/><circle cx="374.200" cy="645.500" r="4.600" fill="none" stroke="#c8c8c8" stroke-width="1.200"/><path d="M377.500 642.200a4.600 4.600 0 0 1 -6.600 6.600z" fill="#c8c8c8"/><g fill="none" stroke="#c8c8c8" stroke-width="1.100"><path d="M389.5 640.8000000000001l4.200 2.200v5l-4.200 2.400-4.200-2.400v-5zM385.3 643.0l4.200 2.200 4.200-2.200M389.5 645.2v5"/></g></svg>
<div class="t" style="left:116.500px;top:639.500px;font-size:8.500px;color:#8a8a8a">#</div>
<div class="t" style="left:149px;top:639px;font-size:10px;color:#a0a0a0">Layer Name</div>
<div class="t" style="left:416px;top:639px;font-size:9.600px;color:#a0a0a0">Parent &amp; Link</div>
<div class="a" style="left:11px;top:655px;width:532.500px;height:17px;background:#4a4a4a"></div>
<div class="a" style="left:11px;top:672px;width:532.500px;height:17px;background:#262626;border-bottom:1px solid #1e1e1e"></div>
<div class="a" style="left:11px;top:689px;width:532.500px;height:17px;background:#262626;border-bottom:1px solid #1e1e1e"></div>
<div class="a" style="left:11px;top:706px;width:532.500px;height:17px;background:#262626;border-bottom:1px solid #1e1e1e"></div>
<div class="a" style="left:11px;top:723px;width:532.500px;height:17px;background:#262626;border-bottom:1px solid #1e1e1e"></div>
<div class="a" style="left:11px;top:740px;width:532.500px;height:17px;background:#262626;border-bottom:1px solid #1e1e1e"></div>
<div class="a" style="left:11px;top:757px;width:532.500px;height:17px;background:#262626;border-bottom:1px solid #1e1e1e"></div>
<div class="a" style="left:11px;top:774px;width:532.500px;height:17px;background:#262626;border-bottom:1px solid #1e1e1e"></div>
<div class="a" style="left:11px;top:791px;width:532.500px;height:17px;background:#262626;border-bottom:1px solid #1e1e1e"></div>
<div class="a" style="left:11px;top:808px;width:532.500px;height:17px;background:#262626;border-bottom:1px solid #1e1e1e"></div>
<div class="a" style="left:11px;top:825px;width:532.500px;height:17px;background:#262626;border-bottom:1px solid #1e1e1e"></div>
<div class="a" style="left:11px;top:842px;width:532.500px;height:17px;background:#2f2f2f;border-bottom:1px solid #222"></div>
<div class="a" style="left:11px;top:859px;width:532.500px;height:17px;background:#2f2f2f;border-bottom:1px solid #222"></div>
<div class="a" style="left:11px;top:876px;width:532.500px;height:17px;background:#2f2f2f;border-bottom:1px solid #222"></div>
<div class="a" style="left:11px;top:893px;width:532.500px;height:17px;background:#2f2f2f;border-bottom:1px solid #222"></div>
<div class="a" style="left:11px;top:671px;width:532.500px;height:1px;background:#2e2e2e"></div>
<svg style="left:10px;top:650px" width="540" height="265" viewBox="10 650 540 265"><rect x="14.6" y="656.3" width="13.8" height="12.800" fill="#3d3d3d"/><rect x="44.9" y="656.3" width="13.4" height="12.800" fill="#3d3d3d"/><rect x="59.8" y="656.3" width="13.4" height="12.800" fill="#3d3d3d"/><path d="M16.0 663c2.600-4.600 8.400-4.600 11 0-2.600 4.600-8.400 4.600-11 0z" fill="#e4e4e4"/><circle cx="21.5" cy="663" r="2.300" fill="#3d3d3d"/><circle cx="21.5" cy="663" r="1" fill="#e4e4e4"/><path d="M84.9 661.7l3.600 3.600 3.600-3.600" fill="none" stroke="#b8b8b8" stroke-width="1.200"/><rect x="96" y="657.3" width="12.200" height="11.800" fill="#b53838"/><rect x="146.600" y="657" width="13" height="13" rx="2" fill="#fff" stroke="#000" stroke-width="1"/><rect x="278" y="656.4" width="12.9" height="12.400" fill="#3d3d3d"/><rect x="293" y="656.4" width="12.7" height="12.400" fill="#3d3d3d"/><rect x="308.2" y="656.4" width="12.6" height="12.400" fill="#3d3d3d"/><rect x="353" y="656.4" width="12.5" height="12.400" fill="#3d3d3d"/><rect x="368" y="656.4" width="12.4" height="12.400" fill="#3d3d3d"/><g fill="none" stroke="#e0e0e0" stroke-width="1.400"><path d="M278.4 664.8h12M280.09999999999997 664.8c-1.200-8.600 9.800-8.600 8.600 0M280.4 661.6h8M284.4 658.5v9.500"/></g><path d="M310 667.5l9.500-9.500" stroke="#d0d0d0" stroke-width="1.200"/><rect x="383.500" y="655.8" width="12.200" height="15" fill="none" stroke="#e8e8e8" stroke-width="1" stroke-dasharray="1 1"/><path d="M389.600 660v4.500M389.600 664.5l-3.400 2M389.600 664.5l3.400 2" stroke="#e0e0e0" stroke-width="1" fill="none"/><path d="M389.600 658l2 2.600h-4z" fill="#e0e0e0"/><circle cx="385.800" cy="666.6" r="1.100" fill="#e0e0e0"/><circle cx="393.400" cy="666.6" r="1.100" fill="#e0e0e0"/><circle cx="389.600" cy="666.6" r=".8" fill="#e0e0e0"/><path d="M422.02 662.72 L422.64 662.67 L423.04 662.93 L423.31 663.34 L423.44 663.84 L423.40 664.40 L423.19 664.95 L422.81 665.45 L422.28 665.86 L421.63 666.14 L420.89 666.26 L420.12 666.20 L419.35 665.95 L418.66 665.51 L418.08 664.90 L417.66 664.15 L417.45 663.30 L417.45 662.40 L417.69 661.51 L418.17 660.68 L418.85 659.97 L419.72 659.42 L420.72 659.08 L421.80 658.98 L422.89 659.13 L423.94 659.54 L424.87 660.19 L425.62 661.04 L426.14 662.06 L426.40 663.19 L426.36 664.37 L426.03 665.52 L425.40 666.58 L424.51 667.47 L423.41 668.15 L422.15 668.57 L420.81 668.69 L419.45 668.49 L418.17 667.98 L417.03 667.19 L416.12 666.15" fill="none" stroke="#bcbcbc" stroke-width="1.150" stroke-linecap="round"/><rect x="434" y="656" width="90" height="14.500" fill="#242424"/><path d="M510.600 661.4l3.700 3.600 3.700-3.600" fill="none" stroke="#c8c8c8" stroke-width="1.200"/><rect x="14.6" y="843.3" width="13.8" height="12.800" fill="#232323"/><rect x="44.9" y="843.3" width="13.4" height="12.800" fill="#232323"/><rect x="59.8" y="843.3" width="13.4" height="12.800" fill="#232323"/><path d="M16.0 850c2.600-4.600 8.400-4.600 11 0-2.600 4.600-8.400 4.600-11 0z" fill="#e4e4e4"/><circle cx="21.5" cy="850" r="2.300" fill="#232323"/><circle cx="21.5" cy="850" r="1" fill="#e4e4e4"/><path d="M85 846.6999999999999l3.600 3.600-3.600 3.600" fill="none" stroke="#b8b8b8" stroke-width="1.200"/><rect x="96" y="844.3" width="12.200" height="11.800" fill="#e8b8c8"/><g fill="none" stroke="#e0e0e0" stroke-width="1.400"><path d="M278.4 851.8h12M280.09999999999997 851.8c-1.200-8.600 9.800-8.600 8.600 0M280.4 848.6h8M284.4 845.5v9.500"/></g><path d="M383.500 842v17M395.700 842v17" stroke="#d0d0d0" stroke-width="1" stroke-dasharray="1 1"/><path d="M389.600 847v4.500M389.600 851.5l-3.400 2M389.600 851.5l3.400 2" stroke="#e0e0e0" stroke-width="1" fill="none"/><path d="M389.600 845l2 2.600h-4z" fill="#e0e0e0"/><circle cx="385.800" cy="853.6" r="1.100" fill="#e0e0e0"/><circle cx="393.400" cy="853.6" r="1.100" fill="#e0e0e0"/><circle cx="389.600" cy="853.6" r=".8" fill="#e0e0e0"/><path d="M422.02 849.72 L422.64 849.67 L423.04 849.93 L423.31 850.34 L423.44 850.84 L423.40 851.40 L423.19 851.95 L422.81 852.45 L422.28 852.86 L421.63 853.14 L420.89 853.26 L420.12 853.20 L419.35 852.95 L418.66 852.51 L418.08 851.90 L417.66 851.15 L417.45 850.30 L417.45 849.40 L417.69 848.51 L418.17 847.68 L418.85 846.97 L419.72 846.42 L420.72 846.08 L421.80 845.98 L422.89 846.13 L423.94 846.54 L424.87 847.19 L425.62 848.04 L426.14 849.06 L426.40 850.19 L426.36 851.37 L426.03 852.52 L425.40 853.58 L424.51 854.47 L423.41 855.15 L422.15 855.57 L420.81 855.69 L419.45 855.49 L418.17 854.98 L417.03 854.19 L416.12 853.15" fill="none" stroke="#bcbcbc" stroke-width="1.150" stroke-linecap="round"/><rect x="434" y="843" width="90" height="14.500" fill="#1f1f1f"/><path d="M510.600 848.4l3.700 3.600 3.700-3.600" fill="none" stroke="#c8c8c8" stroke-width="1.200"/><rect x="14.6" y="860.3" width="13.8" height="12.800" fill="#232323"/><rect x="44.9" y="860.3" width="13.4" height="12.800" fill="#232323"/><rect x="59.8" y="860.3" width="13.4" height="12.800" fill="#232323"/><path d="M16.0 867c2.600-4.600 8.400-4.600 11 0-2.600 4.600-8.400 4.600-11 0z" fill="#e4e4e4"/><circle cx="21.5" cy="867" r="2.300" fill="#232323"/><circle cx="21.5" cy="867" r="1" fill="#e4e4e4"/><path d="M85 863.6999999999999l3.600 3.600-3.600 3.600" fill="none" stroke="#b8b8b8" stroke-width="1.200"/><rect x="96" y="861.3" width="12.200" height="11.800" fill="#b5a282"/><rect x="293" y="860.4" width="12.7" height="12.400" fill="#262626"/><rect x="308.2" y="860.4" width="12.6" height="12.400" fill="#262626"/><rect x="353" y="860.4" width="12.5" height="12.400" fill="#262626"/><rect x="368" y="860.4" width="12.4" height="12.400" fill="#262626"/><g fill="none" stroke="#e0e0e0" stroke-width="1.400"><path d="M278.4 868.8h12M280.09999999999997 868.8c-1.200-8.600 9.800-8.600 8.600 0M280.4 865.6h8M284.4 862.5v9.500"/></g><path d="M310 871.5l9.500-9.500" stroke="#d0d0d0" stroke-width="1.200"/><path d="M383.500 859v17M395.700 859v17" stroke="#c0c0c0" stroke-width="1"/><g fill="none" stroke="#d8d8d8" stroke-width="1.100"><path d="M389.6 862.5l4.200 2.200v5l-4.200 2.400-4.200-2.400v-5zM385.40000000000003 864.6999999999999l4.200 2.200 4.200-2.200M389.6 866.9v5"/></g><path d="M422.02 866.72 L422.64 866.67 L423.04 866.93 L423.31 867.34 L423.44 867.84 L423.40 868.40 L423.19 868.95 L422.81 869.45 L422.28 869.86 L421.63 870.14 L420.89 870.26 L420.12 870.20 L419.35 869.95 L418.66 869.51 L418.08 868.90 L417.66 868.15 L417.45 867.30 L417.45 866.40 L417.69 865.51 L418.17 864.68 L418.85 863.97 L419.72 863.42 L420.72 863.08 L421.80 862.98 L422.89 863.13 L423.94 863.54 L424.87 864.19 L425.62 865.04 L426.14 866.06 L426.40 867.19 L426.36 868.37 L426.03 869.52 L425.40 870.58 L424.51 871.47 L423.41 872.15 L422.15 872.57 L420.81 872.69 L419.45 872.49 L418.17 871.98 L417.03 871.19 L416.12 870.15" fill="none" stroke="#bcbcbc" stroke-width="1.150" stroke-linecap="round"/><rect x="434" y="860" width="90" height="14.500" fill="#1f1f1f"/><path d="M510.600 865.4l3.700 3.600 3.700-3.600" fill="none" stroke="#c8c8c8" stroke-width="1.200"/><rect x="14.6" y="877.3" width="13.8" height="12.800" fill="#232323"/><rect x="44.9" y="877.3" width="13.4" height="12.800" fill="#232323"/><rect x="59.8" y="877.3" width="13.4" height="12.800" fill="#232323"/><path d="M16.0 884c2.600-4.600 8.400-4.600 11 0-2.600 4.600-8.400 4.600-11 0z" fill="#e4e4e4"/><circle cx="21.5" cy="884" r="2.300" fill="#232323"/><circle cx="21.5" cy="884" r="1" fill="#e4e4e4"/><path d="M85 880.6999999999999l3.600 3.600-3.600 3.600" fill="none" stroke="#b8b8b8" stroke-width="1.200"/><rect x="96" y="878.3" width="12.200" height="11.800" fill="#b5a282"/><rect x="293" y="877.4" width="12.7" height="12.400" fill="#262626"/><rect x="308.2" y="877.4" width="12.6" height="12.400" fill="#262626"/><rect x="353" y="877.4" width="12.5" height="12.400" fill="#262626"/><rect x="368" y="877.4" width="12.4" height="12.400" fill="#262626"/><g fill="none" stroke="#e0e0e0" stroke-width="1.400"><path d="M278.4 885.8h12M280.09999999999997 885.8c-1.200-8.600 9.800-8.600 8.600 0M280.4 882.6h8M284.4 879.5v9.500"/></g><path d="M310 888.5l9.500-9.500" stroke="#d0d0d0" stroke-width="1.200"/><text x="323.500" y="888" font-size="12.500" font-style="italic" fill="#d8d8d8" font-family="Liberation Sans,sans-serif">fx</text><path d="M383.500 876v17M395.700 876v17" stroke="#c0c0c0" stroke-width="1"/><g fill="none" stroke="#d8d8d8" stroke-width="1.100"><path d="M389.6 879.5l4.200 2.200v5l-4.200 2.400-4.200-2.400v-5zM385.40000000000003 881.6999999999999l4.200 2.200 4.200-2.200M389.6 883.9v5"/></g><path d="M422.02 883.72 L422.64 883.67 L423.04 883.93 L423.31 884.34 L423.44 884.84 L423.40 885.40 L423.19 885.95 L422.81 886.45 L422.28 886.86 L421.63 887.14 L420.89 887.26 L420.12 887.20 L419.35 886.95 L418.66 886.51 L418.08 885.90 L417.66 885.15 L417.45 884.30 L417.45 883.40 L417.69 882.51 L418.17 881.68 L418.85 880.97 L419.72 880.42 L420.72 880.08 L421.80 879.98 L422.89 880.13 L423.94 880.54 L424.87 881.19 L425.62 882.04 L426.14 883.06 L426.40 884.19 L426.36 885.37 L426.03 886.52 L425.40 887.58 L424.51 888.47 L423.41 889.15 L422.15 889.57 L420.81 889.69 L419.45 889.49 L418.17 888.98 L417.03 888.19 L416.12 887.15" fill="none" stroke="#bcbcbc" stroke-width="1.150" stroke-linecap="round"/><rect x="434" y="877" width="90" height="14.500" fill="#1f1f1f"/><path d="M510.600 882.4l3.700 3.600 3.700-3.600" fill="none" stroke="#c8c8c8" stroke-width="1.200"/><rect x="14.6" y="894.3" width="13.8" height="12.800" fill="#232323"/><rect x="44.9" y="894.3" width="13.4" height="12.800" fill="#232323"/><rect x="59.8" y="894.3" width="13.4" height="12.800" fill="#232323"/><path d="M16.0 901c2.600-4.600 8.400-4.600 11 0-2.600 4.600-8.400 4.600-11 0z" fill="#e4e4e4"/><circle cx="21.5" cy="901" r="2.300" fill="#232323"/><circle cx="21.5" cy="901" r="1" fill="#e4e4e4"/><path d="M85 897.6999999999999l3.600 3.600-3.600 3.600" fill="none" stroke="#b8b8b8" stroke-width="1.200"/><rect x="96" y="895.3" width="12.200" height="11.800" fill="#6b7be8"/><rect x="293" y="894.4" width="12.7" height="12.400" fill="#262626"/><rect x="308.2" y="894.4" width="12.6" height="12.400" fill="#262626"/><rect x="353" y="894.4" width="12.5" height="12.400" fill="#262626"/><rect x="368" y="894.4" width="12.4" height="12.400" fill="#262626"/><g fill="none" stroke="#e0e0e0" stroke-width="1.400"><path d="M278.4 902.8h12M280.09999999999997 902.8c-1.200-8.600 9.800-8.600 8.600 0M280.4 899.6h8M284.4 896.5v9.500"/></g><path d="M310 905.5l9.500-9.500" stroke="#d0d0d0" stroke-width="1.200"/><circle cx="299.500" cy="901" r="1.800" fill="none" stroke="#6a6a6a" stroke-width="1"/><path d="M299.500 896.5v2M299.500 903.5v2M295 901h2M302 901h2M296.300 897.8l1.300 1.300M301.400 902.9l1.300 1.300M302.700 897.8l-1.300 1.300M296.300 904.2l1.300-1.300" stroke="#6a6a6a" stroke-width="1"/><rect x="383.500" y="894.4" width="12.200" height="12.400" fill="#262626"/><path d="M422.02 900.72 L422.64 900.67 L423.04 900.93 L423.31 901.34 L423.44 901.84 L423.40 902.40 L423.19 902.95 L422.81 903.45 L422.28 903.86 L421.63 904.14 L420.89 904.26 L420.12 904.20 L419.35 903.95 L418.66 903.51 L418.08 902.90 L417.66 902.15 L417.45 901.30 L417.45 900.40 L417.69 899.51 L418.17 898.68 L418.85 897.97 L419.72 897.42 L420.72 897.08 L421.80 896.98 L422.89 897.13 L423.94 897.54 L424.87 898.19 L425.62 899.04 L426.14 900.06 L426.40 901.19 L426.36 902.37 L426.03 903.52 L425.40 904.58 L424.51 905.47 L423.41 906.15 L422.15 906.57 L420.81 906.69 L419.45 906.49 L418.17 905.98 L417.03 905.19 L416.12 904.15" fill="none" stroke="#bcbcbc" stroke-width="1.150" stroke-linecap="round"/><rect x="434" y="894" width="90" height="14.500" fill="#1f1f1f"/><path d="M510.600 899.4l3.700 3.600 3.700-3.600" fill="none" stroke="#c8c8c8" stroke-width="1.200"/><rect x="146" y="845.5" width="8.500" height="9" rx="1" fill="#c0c0c0"/><path d="M155 850l5.500-4.500v9z" fill="#c0c0c0"/><rect x="145.500" y="861" width="15" height="12.500" fill="#2a2a2a" stroke="#c8c8c8" stroke-width="1"/><path d="M147 861v12.500M159 861v12.500" stroke="#c8c8c8" stroke-width="1" stroke-dasharray="1.500 1"/><rect x="149.500" y="863.5" width="3.500" height="3.500" fill="#3a8cf0"/><rect x="153" y="865" width="4.500" height="4" fill="#e03030"/><path d="M149 871l3.500-4.500 3.500 4.500z" fill="#20b040"/><rect x="145.500" y="878" width="15" height="12.500" fill="#2a2a2a" stroke="#c8c8c8" stroke-width="1"/><path d="M147 878v12.500M159 878v12.500" stroke="#c8c8c8" stroke-width="1" stroke-dasharray="1.500 1"/><rect x="149.500" y="880.5" width="3.500" height="3.500" fill="#3a8cf0"/><rect x="153" y="882" width="4.500" height="4" fill="#e03030"/><path d="M149 888l3.500-4.500 3.500 4.500z" fill="#20b040"/><path d="M153 895l1.700 4h4.300l-3.400 2.800 1.300 4.400-3.900-2.600-3.900 2.600 1.300-4.400-3.400-2.800h4.300z" fill="#d0d0d0"/><path d="M101.9 678.7l3.600 3.600 3.600-3.600" fill="none" stroke="#b8b8b8" stroke-width="1.200"/><rect x="121" y="697" width="1.500" height="1" fill="#444"/><circle cx="137.500" cy="697.5" r="5" fill="none" stroke="#c6c6c6" stroke-width="1.300"/><path d="M135.500 690.5h4M137.500 690.5v2" fill="none" stroke="#c6c6c6" stroke-width="1.300"/><path d="M434.72 696.72 L435.34 696.67 L435.74 696.93 L436.01 697.34 L436.14 697.84 L436.10 698.40 L435.89 698.95 L435.51 699.45 L434.98 699.86 L434.33 700.14 L433.59 700.26 L432.82 700.20 L432.05 699.95 L431.36 699.51 L430.78 698.90 L430.36 698.15 L430.15 697.30 L430.15 696.40 L430.39 695.51 L430.87 694.68 L431.55 693.97 L432.42 693.42 L433.42 693.08 L434.50 692.98 L435.59 693.13 L436.64 693.54 L437.57 694.19 L438.32 695.04 L438.84 696.06 L439.10 697.19 L439.06 698.37 L438.73 699.52 L438.10 700.58 L437.21 701.47 L436.11 702.15 L434.85 702.57 L433.51 702.69 L432.15 702.49 L430.87 701.98 L429.73 701.19 L428.82 700.15" fill="none" stroke="#bcbcbc" stroke-width="1.150" stroke-linecap="round"/><rect x="121" y="714" width="1.500" height="1" fill="#444"/><circle cx="137.500" cy="714.5" r="5" fill="none" stroke="#c6c6c6" stroke-width="1.300"/><path d="M135.500 707.5h4M137.500 707.5v2" fill="none" stroke="#c6c6c6" stroke-width="1.300"/><path d="M434.72 713.72 L435.34 713.67 L435.74 713.93 L436.01 714.34 L436.14 714.84 L436.10 715.40 L435.89 715.95 L435.51 716.45 L434.98 716.86 L434.33 717.14 L433.59 717.26 L432.82 717.20 L432.05 716.95 L431.36 716.51 L430.78 715.90 L430.36 715.15 L430.15 714.30 L430.15 713.40 L430.39 712.51 L430.87 711.68 L431.55 710.97 L432.42 710.42 L433.42 710.08 L434.50 709.98 L435.59 710.13 L436.64 710.54 L437.57 711.19 L438.32 712.04 L438.84 713.06 L439.10 714.19 L439.06 715.37 L438.73 716.52 L438.10 717.58 L437.21 718.47 L436.11 719.15 L434.85 719.57 L433.51 719.69 L432.15 719.49 L430.87 718.98 L429.73 718.19 L428.82 717.15" fill="none" stroke="#bcbcbc" stroke-width="1.150" stroke-linecap="round"/><rect x="121" y="731" width="1.500" height="1" fill="#444"/><path d="M18 730.5l5.500-4v8z" fill="#c6c6c6"/><rect x="30.300" y="724.5" width="13" height="13" fill="#1e1e1e"/><path d="M36.800 726l4.500 4.500-4.500 4.500-4.500-4.500z" fill="#2d8ceb"/><path d="M54.800 730.5l-5.500-4v8z" fill="#4e4e4e"/><rect x="130.500" y="724" width="14" height="15" fill="#1f1f1f"/><circle cx="137.500" cy="731.5" r="5" fill="none" stroke="#2d8ceb" stroke-width="1.300"/><path d="M135.500 724.5h4M137.500 724.5v2M137.500 731.5l2.600-3" fill="none" stroke="#2d8ceb" stroke-width="1.300"/><path d="M150 726v9.500h10.500M151 733l2.500-4.500 2.500 3.500 3-3" fill="none" stroke="#c8c8c8" stroke-width="1.200"/><g fill="none" stroke="#d0d0d0" stroke-width="1.300"><rect x="277.800" y="728.7" width="6.500" height="5" rx="2.500"/><rect x="282.200" y="728.7" width="6.500" height="5" rx="2.500"/></g><path d="M434.72 730.72 L435.34 730.67 L435.74 730.93 L436.01 731.34 L436.14 731.84 L436.10 732.40 L435.89 732.95 L435.51 733.45 L434.98 733.86 L434.33 734.14 L433.59 734.26 L432.82 734.20 L432.05 733.95 L431.36 733.51 L430.78 732.90 L430.36 732.15 L430.15 731.30 L430.15 730.40 L430.39 729.51 L430.87 728.68 L431.55 727.97 L432.42 727.42 L433.42 727.08 L434.50 726.98 L435.59 727.13 L436.64 727.54 L437.57 728.19 L438.32 729.04 L438.84 730.06 L439.10 731.19 L439.06 732.37 L438.73 733.52 L438.10 734.58 L437.21 735.47 L436.11 736.15 L434.85 736.57 L433.51 736.69 L432.15 736.49 L430.87 735.98 L429.73 735.19 L428.82 734.15" fill="none" stroke="#bcbcbc" stroke-width="1.150" stroke-linecap="round"/><rect x="121" y="748" width="1.500" height="1" fill="#444"/><circle cx="137.500" cy="748.5" r="5" fill="none" stroke="#c6c6c6" stroke-width="1.300"/><path d="M135.500 741.5h4M137.500 741.5v2" fill="none" stroke="#c6c6c6" stroke-width="1.300"/><path d="M434.72 747.72 L435.34 747.67 L435.74 747.93 L436.01 748.34 L436.14 748.84 L436.10 749.40 L435.89 749.95 L435.51 750.45 L434.98 750.86 L434.33 751.14 L433.59 751.26 L432.82 751.20 L432.05 750.95 L431.36 750.51 L430.78 749.90 L430.36 749.15 L430.15 748.30 L430.15 747.40 L430.39 746.51 L430.87 745.68 L431.55 744.97 L432.42 744.42 L433.42 744.08 L434.50 743.98 L435.59 744.13 L436.64 744.54 L437.57 745.19 L438.32 746.04 L438.84 747.06 L439.10 748.19 L439.06 749.37 L438.73 750.52 L438.10 751.58 L437.21 752.47 L436.11 753.15 L434.85 753.57 L433.51 753.69 L432.15 753.49 L430.87 752.98 L429.73 752.19 L428.82 751.15" fill="none" stroke="#bcbcbc" stroke-width="1.150" stroke-linecap="round"/><rect x="121" y="765" width="1.500" height="1" fill="#444"/><path d="M18 764.5l5.500-4v8z" fill="#c6c6c6"/><rect x="30.300" y="758.5" width="13" height="13" fill="#1e1e1e"/><path d="M36.800 760l4.500 4.500-4.500 4.500-4.500-4.500z" fill="#2d8ceb"/><path d="M54.800 764.5l-5.500-4v8z" fill="#4e4e4e"/><rect x="130.500" y="758" width="14" height="15" fill="#1f1f1f"/><circle cx="137.500" cy="765.5" r="5" fill="none" stroke="#2d8ceb" stroke-width="1.300"/><path d="M135.500 758.5h4M137.500 758.5v2M137.500 765.5l2.600-3" fill="none" stroke="#2d8ceb" stroke-width="1.300"/><path d="M150 760v9.500h10.500M151 767l2.500-4.500 2.500 3.500 3-3" fill="none" stroke="#c8c8c8" stroke-width="1.200"/><path d="M434.72 764.72 L435.34 764.67 L435.74 764.93 L436.01 765.34 L436.14 765.84 L436.10 766.40 L435.89 766.95 L435.51 767.45 L434.98 767.86 L434.33 768.14 L433.59 768.26 L432.82 768.20 L432.05 767.95 L431.36 767.51 L430.78 766.90 L430.36 766.15 L430.15 765.30 L430.15 764.40 L430.39 763.51 L430.87 762.68 L431.55 761.97 L432.42 761.42 L433.42 761.08 L434.50 760.98 L435.59 761.13 L436.64 761.54 L437.57 762.19 L438.32 763.04 L438.84 764.06 L439.10 765.19 L439.06 766.37 L438.73 767.52 L438.10 768.58 L437.21 769.47 L436.11 770.15 L434.85 770.57 L433.51 770.69 L432.15 770.49 L430.87 769.98 L429.73 769.19 L428.82 768.15" fill="none" stroke="#bcbcbc" stroke-width="1.150" stroke-linecap="round"/><rect x="121" y="782" width="1.500" height="1" fill="#444"/><path d="M18 781.5l5.500-4v8z" fill="#c6c6c6"/><rect x="30.300" y="775.5" width="13" height="13" fill="#1e1e1e"/><path d="M36.800 777l4.500 4.500-4.500 4.500-4.500-4.500z" fill="#2d8ceb"/><path d="M54.800 781.5l-5.500-4v8z" fill="#4e4e4e"/><rect x="130.500" y="775" width="14" height="15" fill="#1f1f1f"/><circle cx="137.500" cy="782.5" r="5" fill="none" stroke="#2d8ceb" stroke-width="1.300"/><path d="M135.500 775.5h4M137.500 775.5v2M137.500 782.5l2.600-3" fill="none" stroke="#2d8ceb" stroke-width="1.300"/><path d="M150 777v9.500h10.500M151 784l2.500-4.500 2.500 3.500 3-3" fill="none" stroke="#c8c8c8" stroke-width="1.200"/><path d="M434.72 781.72 L435.34 781.67 L435.74 781.93 L436.01 782.34 L436.14 782.84 L436.10 783.40 L435.89 783.95 L435.51 784.45 L434.98 784.86 L434.33 785.14 L433.59 785.26 L432.82 785.20 L432.05 784.95 L431.36 784.51 L430.78 783.90 L430.36 783.15 L430.15 782.30 L430.15 781.40 L430.39 780.51 L430.87 779.68 L431.55 778.97 L432.42 778.42 L433.42 778.08 L434.50 777.98 L435.59 778.13 L436.64 778.54 L437.57 779.19 L438.32 780.04 L438.84 781.06 L439.10 782.19 L439.06 783.37 L438.73 784.52 L438.10 785.58 L437.21 786.47 L436.11 787.15 L434.85 787.57 L433.51 787.69 L432.15 787.49 L430.87 786.98 L429.73 786.19 L428.82 785.15" fill="none" stroke="#bcbcbc" stroke-width="1.150" stroke-linecap="round"/><rect x="121" y="799" width="1.500" height="1" fill="#444"/><path d="M18 798.5l5.500-4v8z" fill="#c6c6c6"/><rect x="30.300" y="792.5" width="13" height="13" fill="#1e1e1e"/><path d="M36.800 794l4.500 4.500-4.500 4.500-4.500-4.500z" fill="#2d8ceb"/><path d="M54.800 798.5l-5.500-4v8z" fill="#4e4e4e"/><rect x="130.500" y="792" width="14" height="15" fill="#1f1f1f"/><circle cx="137.500" cy="799.5" r="5" fill="none" stroke="#2d8ceb" stroke-width="1.300"/><path d="M135.500 792.5h4M137.500 792.5v2M137.500 799.5l2.600-3" fill="none" stroke="#2d8ceb" stroke-width="1.300"/><path d="M150 794v9.500h10.500M151 801l2.500-4.500 2.500 3.500 3-3" fill="none" stroke="#c8c8c8" stroke-width="1.200"/><path d="M434.72 798.72 L435.34 798.67 L435.74 798.93 L436.01 799.34 L436.14 799.84 L436.10 800.40 L435.89 800.95 L435.51 801.45 L434.98 801.86 L434.33 802.14 L433.59 802.26 L432.82 802.20 L432.05 801.95 L431.36 801.51 L430.78 800.90 L430.36 800.15 L430.15 799.30 L430.15 798.40 L430.39 797.51 L430.87 796.68 L431.55 795.97 L432.42 795.42 L433.42 795.08 L434.50 794.98 L435.59 795.13 L436.64 795.54 L437.57 796.19 L438.32 797.04 L438.84 798.06 L439.10 799.19 L439.06 800.37 L438.73 801.52 L438.10 802.58 L437.21 803.47 L436.11 804.15 L434.85 804.57 L433.51 804.69 L432.15 804.49 L430.87 803.98 L429.73 803.19 L428.82 802.15" fill="none" stroke="#bcbcbc" stroke-width="1.150" stroke-linecap="round"/><rect x="121" y="816" width="1.500" height="1" fill="#444"/><circle cx="137.500" cy="816.5" r="5" fill="none" stroke="#c6c6c6" stroke-width="1.300"/><path d="M135.500 809.5h4M137.500 809.5v2" fill="none" stroke="#c6c6c6" stroke-width="1.300"/><path d="M434.72 815.72 L435.34 815.67 L435.74 815.93 L436.01 816.34 L436.14 816.84 L436.10 817.40 L435.89 817.95 L435.51 818.45 L434.98 818.86 L434.33 819.14 L433.59 819.26 L432.82 819.20 L432.05 818.95 L431.36 818.51 L430.78 817.90 L430.36 817.15 L430.15 816.30 L430.15 815.40 L430.39 814.51 L430.87 813.68 L431.55 812.97 L432.42 812.42 L433.42 812.08 L434.50 811.98 L435.59 812.13 L436.64 812.54 L437.57 813.19 L438.32 814.04 L438.84 815.06 L439.10 816.19 L439.06 817.37 L438.73 818.52 L438.10 819.58 L437.21 820.47 L436.11 821.15 L434.85 821.57 L433.51 821.69 L432.15 821.49 L430.87 820.98 L429.73 820.19 L428.82 819.15" fill="none" stroke="#bcbcbc" stroke-width="1.150" stroke-linecap="round"/><path d="M102 829.4l3.600 3.600-3.600 3.600" fill="none" stroke="#b8b8b8" stroke-width="1.200"/></svg>
<div class="t" style="left:117.500px;top:656px;color:#d8d8d8;font-size:11.500px">1</div>
<div class="a" style="left:162px;top:655.5px;width:111px;height:16px;background:#3a3a3a;border:1.500px solid #a8a8a8"></div>
<div class="t" style="left:166px;top:655.8px;color:#cfcfcf;font-size:11.500px">Cam Control</div>
<div class="t" style="left:441.500px;top:656px;color:#d8d8d8;font-size:11px">None</div>
<div class="t" style="left:117.500px;top:843px;color:#d8d8d8;font-size:11.500px">2</div>
<div class="t" style="left:166px;top:843px;color:#d8d8d8;font-size:11px">Camera 1</div>
<div class="t" style="left:441.500px;top:843px;color:#d8d8d8;font-size:11px;width:66px;overflow:hidden">1. Cam Contr</div>
<div class="t" style="left:117.500px;top:860px;color:#d8d8d8;font-size:11.500px">3</div>
<div class="t" style="left:166px;top:860px;color:#d8d8d8;font-size:11px">[Logo]</div>
<div class="t" style="left:441.500px;top:860px;color:#d8d8d8;font-size:11px">None</div>
<div class="t" style="left:117.500px;top:877px;color:#d8d8d8;font-size:11.500px">4</div>
<div class="t" style="left:166px;top:877px;color:#d8d8d8;font-size:11px">[Logo]</div>
<div class="t" style="left:441.500px;top:877px;color:#d8d8d8;font-size:11px">None</div>
<div class="t" style="left:117.500px;top:894px;color:#d8d8d8;font-size:11.500px">33</div>
<div class="t" style="left:166px;top:894px;color:#d8d8d8;font-size:11px">Shape Layer 1</div>
<div class="t" style="left:441.500px;top:894px;color:#d8d8d8;font-size:11px">None</div>
<style>.tv{position:absolute;white-space:nowrap;line-height:14px;color:#2d8ceb;font-size:10.500px;word-spacing:-1.500px}.tv i{font-style:normal;color:#b0b0b0;font-size:10px;margin:0 1px}</style>
<div class="t" style="left:118px;top:674px;color:#bdbdbd">Transform</div>
<div class="t b" style="left:279px;top:673px">Reset</div>
<div class="tv" style="left:278.500px;top:688.7px">0,0 ,0,0 ,0,0</div>
<div class="t" style="left:151px;top:691px;color:#c4c4c4">Anchor Point</div>
<div class="tv" style="left:278.500px;top:705.7px">960,0 ,540,0 ,0,0</div>
<div class="t" style="left:151px;top:708px;color:#c4c4c4">Position</div>
<div class="a" style="left:166px;top:723px;width:107.500px;height:15.500px;background:#4c4c4c"></div>
<div class="tv" style="left:296px;top:722.7px">80,0 ,80,0 ,80,0 <i>%</i></div>
<div class="t" style="left:170px;top:725px;color:#c4c4c4">Scale</div>
<div class="tv" style="left:278.500px;top:739.7px">0,0<i>&deg;</i>,0,0<i>&deg;</i>,0,0<i>&deg;</i></div>
<div class="t" style="left:151px;top:742px;color:#c4c4c4">Orientation</div>
<div class="tv" style="left:278.500px;top:756.7px">0<i>x</i>+0,0<i>&deg;</i></div>
<div class="t" style="left:170px;top:759px;color:#c4c4c4">X Rotation</div>
<div class="tv" style="left:278.500px;top:773.7px">0<i>x</i>+0,0<i>&deg;</i></div>
<div class="t" style="left:170px;top:776px;color:#c4c4c4">Y Rotation</div>
<div class="tv" style="left:278.500px;top:790.7px">0<i>x</i>+0,0<i>&deg;</i></div>
<div class="t" style="left:170px;top:793px;color:#c4c4c4">Z Rotation</div>
<div class="tv" style="left:278.500px;top:807.7px">0<i>%</i></div>
<div class="t" style="left:151px;top:810px;color:#c4c4c4">Opacity</div>
<div class="t" style="left:118.500px;top:827px;color:#bdbdbd">Material Options</div>
<div class="a" style="left:112.500px;top:717px;width:284px;height:27.500px;border:3.500px solid #b4e01e;background:transparent"></div>
<div class="a" style="left:116px;top:752.500px;width:246px;height:59.500px;border:3.500px solid #b4e01e"></div>
<!-- ===== timeline right: ruler + tracks ===== -->
<div class="a" style="left:543px;top:634px;width:1.300px;height:358px;background:#050505"></div>
<div class="a" style="left:544.300px;top:655px;width:6.700px;height:336px;background:#2c2c2c"></div>
<div class="a" style="left:551px;top:655px;width:1024px;height:336px;background:#333"></div>
<div class="a" style="left:545px;top:671px;width:1030px;height:1px;background:#282828"></div>
<div class="a" style="left:545px;top:688px;width:1030px;height:1px;background:#282828"></div>
<div class="a" style="left:545px;top:705px;width:1030px;height:1px;background:#282828"></div>
<div class="a" style="left:545px;top:722px;width:1030px;height:1px;background:#282828"></div>
<div class="a" style="left:545px;top:739px;width:1030px;height:1px;background:#282828"></div>
<div class="a" style="left:545px;top:756px;width:1030px;height:1px;background:#282828"></div>
<div class="a" style="left:545px;top:773px;width:1030px;height:1px;background:#282828"></div>
<div class="a" style="left:545px;top:790px;width:1030px;height:1px;background:#282828"></div>
<div class="a" style="left:545px;top:807px;width:1030px;height:1px;background:#282828"></div>
<div class="a" style="left:545px;top:824px;width:1030px;height:1px;background:#282828"></div>
<div class="a" style="left:545px;top:841px;width:1030px;height:1px;background:#282828"></div>
<div class="a" style="left:545px;top:858px;width:1030px;height:1px;background:#282828"></div>
<div class="a" style="left:545px;top:875px;width:1030px;height:1px;background:#282828"></div>
<div class="a" style="left:545px;top:892px;width:1030px;height:1px;background:#282828"></div>
<div class="a" style="left:545px;top:909px;width:1030px;height:1px;background:#282828"></div>
<div class="a" style="left:551px;top:655px;width:1024px;height:16px;background:#b0484e;border-top:1px solid #d88080"></div>
<div class="a" style="left:551px;top:842px;width:1024px;height:15.500px;background:#947f85"></div>
<div class="a" style="left:551px;top:859.3px;width:1024px;height:15.400px;background:#756b5c"></div>
<div class="a" style="left:551px;top:876.3px;width:1024px;height:15.400px;background:#756b5c"></div>
<div class="a" style="left:551px;top:893.3px;width:1024px;height:15.400px;background:#535b8f"></div>
<div class="a" style="left:545px;top:604px;width:1030px;height:1.500px;background:#111"></div>
<div class="a" style="left:551px;top:605.500px;width:836px;height:9px;background:#6a6a6a"></div>
<div class="a" style="left:1393px;top:605.500px;width:176px;height:9px;background:#3a372f;border-radius:0 2px 2px 0"></div>
<div class="a" style="left:544.500px;top:605.500px;width:6px;height:9px;background:#2d8ceb;border-radius:5px 0 0 5px"></div>
<div class="a" style="left:1387px;top:605.500px;width:6px;height:9px;background:#2d8ceb;border-radius:0 5px 5px 0"></div>
<div class="a" style="left:1237px;top:605.500px;width:1.500px;height:9px;background:#3a7ec8"></div>
<div class="a" style="left:545px;top:634px;width:1030px;height:1.500px;background:#0c0c0c"></div>
<div class="a" style="left:551px;top:635.500px;width:1024px;height:14.500px;background:#606060"></div>
<div class="a" style="left:544.500px;top:635.500px;width:6px;height:14.500px;background:#2d8ceb;border-radius:6px 0 0 6px"></div>
<div class="a" style="left:545px;top:650px;width:1030px;height:1.500px;background:#0c0c0c"></div>
<div class="a" style="left:551px;top:651px;width:7.500px;height:3px;background:#12c026"></div>
<div class="a" style="left:1386.500px;top:651px;width:188.500px;height:3.200px;background:#12c826"></div>
<div class="a" style="left:545px;top:614.500px;width:30px;height:14px;overflow:hidden"><div class="t" style="left:-5px;top:0;color:#b4b4b4">0:00f</div></div>
<div class="t" style="left:590.8px;top:614.500px;width:58px;text-align:center;color:#b4b4b4">10f</div>
<div class="t" style="left:660.4px;top:614.500px;width:58px;text-align:center;color:#b4b4b4">20f</div>
<div class="t" style="left:729.9px;top:614.500px;width:58px;text-align:center;color:#b4b4b4">01:00f</div>
<div class="t" style="left:799.5px;top:614.500px;width:58px;text-align:center;color:#b4b4b4">10f</div>
<div class="t" style="left:869.0px;top:614.500px;width:58px;text-align:center;color:#b4b4b4">20f</div>
<div class="t" style="left:938.6px;top:614.500px;width:58px;text-align:center;color:#b4b4b4">02:00f</div>
<div class="t" style="left:1008.1px;top:614.500px;width:58px;text-align:center;color:#b4b4b4">10f</div>
<div class="t" style="left:1077.7px;top:614.500px;width:58px;text-align:center;color:#b4b4b4">20f</div>
<div class="t" style="left:1147.2px;top:614.500px;width:58px;text-align:center;color:#b4b4b4">03:00f</div>
<div class="t" style="left:1216.8px;top:614.500px;width:58px;text-align:center;color:#b4b4b4">10f</div>
<div class="t" style="left:1286.3px;top:614.500px;width:58px;text-align:center;color:#b4b4b4">20f</div>
<div class="t" style="left:1355.9px;top:614.500px;width:58px;text-align:center;color:#b4b4b4">04:00f</div>
<div class="t" style="left:1425.4px;top:614.500px;width:58px;text-align:center;color:#b4b4b4">10f</div>
<div class="t" style="left:1495.0px;top:614.500px;width:58px;text-align:center;color:#b4b4b4">20f</div>
<svg style="left:544px;top:600px" width="1049" height="395" viewBox="544 600 1049 395"><rect x="550.8" y="627" width="1.200" height="7" fill="#9a9a9a"/><rect x="620.3" y="629.5" width="1.200" height="4.5" fill="#9a9a9a"/><rect x="689.9" y="629.5" width="1.200" height="4.5" fill="#9a9a9a"/><rect x="759.4" y="627" width="1.200" height="7" fill="#9a9a9a"/><rect x="829.0" y="629.5" width="1.200" height="4.5" fill="#9a9a9a"/><rect x="898.5" y="629.5" width="1.200" height="4.5" fill="#9a9a9a"/><rect x="968.1" y="627" width="1.200" height="7" fill="#9a9a9a"/><rect x="1037.6" y="629.5" width="1.200" height="4.5" fill="#9a9a9a"/><rect x="1107.2" y="629.5" width="1.200" height="4.5" fill="#9a9a9a"/><rect x="1176.8" y="627" width="1.200" height="7" fill="#9a9a9a"/><rect x="1246.3" y="629.5" width="1.200" height="4.5" fill="#9a9a9a"/><rect x="1315.8" y="629.5" width="1.200" height="4.5" fill="#9a9a9a"/><rect x="1385.4" y="627" width="1.200" height="7" fill="#9a9a9a"/><rect x="1454.9" y="629.5" width="1.200" height="4.5" fill="#9a9a9a"/><rect x="1524.5" y="629.5" width="1.200" height="4.5" fill="#9a9a9a"/><path d="M551.5 727.0l4.5 4.5-4.5 4.5-4.5-4.5z" fill="#c8c8c8"/><path d="M551.5 761.0l4.5 4.5-4.5 4.5-4.5-4.5z" fill="#c8c8c8"/><path d="M551.5 778.0l4.5 4.5-4.5 4.5-4.5-4.5z" fill="#c8c8c8"/><path d="M551.5 795.0l4.5 4.5-4.5 4.5-4.5-4.5z" fill="#c8c8c8"/><path d="M1386.5 761.2l4.3 4.3-4.3 4.3-4.3-4.3z" fill="#a0a0a0"/><path d="M1386.5 778.2l4.3 4.3-4.3 4.3-4.3-4.3z" fill="#a0a0a0"/><path d="M1386.5 795.2l4.3 4.3-4.3 4.3-4.3-4.3z" fill="#a0a0a0"/><rect x="1385.8" y="626" width="1.500" height="365" fill="#2d8ceb"/><path d="M1381.0 620.500h11v6.500l-5.500 6.300-5.500-6.300z" fill="#2d8ceb"/><path d="M1383.5 675.8h6M1383.5 686.8h6M1385.9 675.8v11M1387.1 675.8v11" stroke="#e0e0e0" stroke-width="1.100" fill="none"/><path d="M1383.5 692.8h6M1383.5 703.8h6M1385.9 692.8v11M1387.1 692.8v11" stroke="#e0e0e0" stroke-width="1.100" fill="none"/><path d="M1383.5 709.8h6M1383.5 720.8h6M1385.9 709.8v11M1387.1 709.8v11" stroke="#e0e0e0" stroke-width="1.100" fill="none"/><path d="M1383.5 743.8h6M1383.5 754.8h6M1385.9 743.8v11M1387.1 743.8v11" stroke="#e0e0e0" stroke-width="1.100" fill="none"/><path d="M1383.5 811.8h6M1383.5 822.8h6M1385.9 811.8v11M1387.1 811.8v11" stroke="#e0e0e0" stroke-width="1.100" fill="none"/><path d="M1383.5 828.8h6M1383.5 839.8h6M1385.9 828.8v11M1387.1 828.8v11" stroke="#e0e0e0" stroke-width="1.100" fill="none"/><path d="M1386.5 724.5l7 7-7 7-7-7z" fill="#333" stroke="#2d8ceb" stroke-width="1.400"/><path d="M1386.5 727.2l4.3 4.3-4.3 4.3-4.3-4.3z" fill="#b8b8b8"/><path d="M552.500 865v-5h6c-3.500 0-5.500 2-6 6z" fill="#3a342a"/><path d="M552.500 882v-5h6c-3.500 0-5.500 2-6 6z" fill="#3a342a"/><path d="M1579 638h11v8.500l-5.500 5-5.500-5z" fill="#b8b8b8"/><path d="M1582.500 658.500h7.500v9h-5" fill="#b8b8b8"/><path d="M1583 658.500l-5 5.500 3 2" fill="none" stroke="#b8b8b8" stroke-width="1.200"/><circle cx="1583.500" cy="667" r="2.600" fill="#232323" stroke="#b8b8b8" stroke-width="1.100"/></svg>
<div class="a" style="left:11px;top:992px;width:1582px;height:1.200px;background:#060606"></div>
<div class="a" style="left:651px;top:992.500px;width:924px;height:15.500px;background:#1e1e1e"></div>
<div class="a" style="left:651px;top:993px;width:757px;height:14px;background:#323232;border-radius:7px"></div>
<svg style="left:10px;top:992px" width="1583" height="17" viewBox="10 992 1583 17"><path d="M549 1002.500l3.200-3 1.800 1.400 1.600-1.400 3.400 3z" fill="#c4c4c4"/><path d="M575 1001.500h42.500" stroke="#3a3a3a" stroke-width="1.500"/><circle cx="583.500" cy="1001.500" r="4" fill="#232323" stroke="#c4c4c4" stroke-width="1.400"/><path d="M629.500 1004.500l5-6 3 3.500 2-2.500 6.500 5z" fill="#c4c4c4"/><rect x="15" y="993.500" width="16.800" height="14.500" rx="1.500" fill="#1c1c1c" stroke="#2c2c2c" stroke-width=".6"/><g fill="#1c1c1c" stroke="#2d8ceb" stroke-width="1.200"><rect x="18.500" y="996.500" width="5.600" height="5.600" rx=".6"/><rect x="20.500" y="998.500" width="5.600" height="5.600" rx=".6"/><rect x="22.800" y="1000.800" width="5.600" height="5.600" rx=".6"/></g><path d="M24.600 1003.600h2M25.600 1002.600v2" stroke="#2d8ceb" stroke-width="1"/><g fill="none" stroke="#c4c4c4" stroke-width="1.200"><circle cx="41" cy="999.300" r="3.500"/><rect x="41.500" y="1000" width="6" height="5.600" fill="#232323"/></g><rect x="58.200" y="995.500" width="6.500" height="10.500" fill="#7a7a7a"/><g fill="none" stroke="#c4c4c4" stroke-width="1.400"><path d="M59.200 995.500c-1.500 2-1 3.500-3 5.200 2 1.700 1.500 3.200 3 5.300M63.700 995.500c1.500 2 1 3.500 3 5.200-2 1.700-1.500 3.200-3 5.300"/></g><circle cx="79" cy="1000.500" r="4.300" fill="#c4c4c4"/><path d="M74 1005.300h12" stroke="#c4c4c4" stroke-width="1.400"/><path d="M83.500 998h3l-.8 3.500" fill="none" stroke="#c4c4c4" stroke-width="1.100"/></svg>
<div class="t" style="left:116px;top:994px;color:#b0b0b0">Frame Render Time:</div>
<div class="t" style="left:222.500px;top:994px;color:#dba545">185ms</div>
<div class="a" style="left:276px;top:993.500px;width:133px;height:15px;border:1px solid #383838;border-radius:2px"></div>
<div class="t" style="left:281px;top:994px;color:#b0b0b0">Toggle Switches / Modes</div>
</div></div>
</body></html>
